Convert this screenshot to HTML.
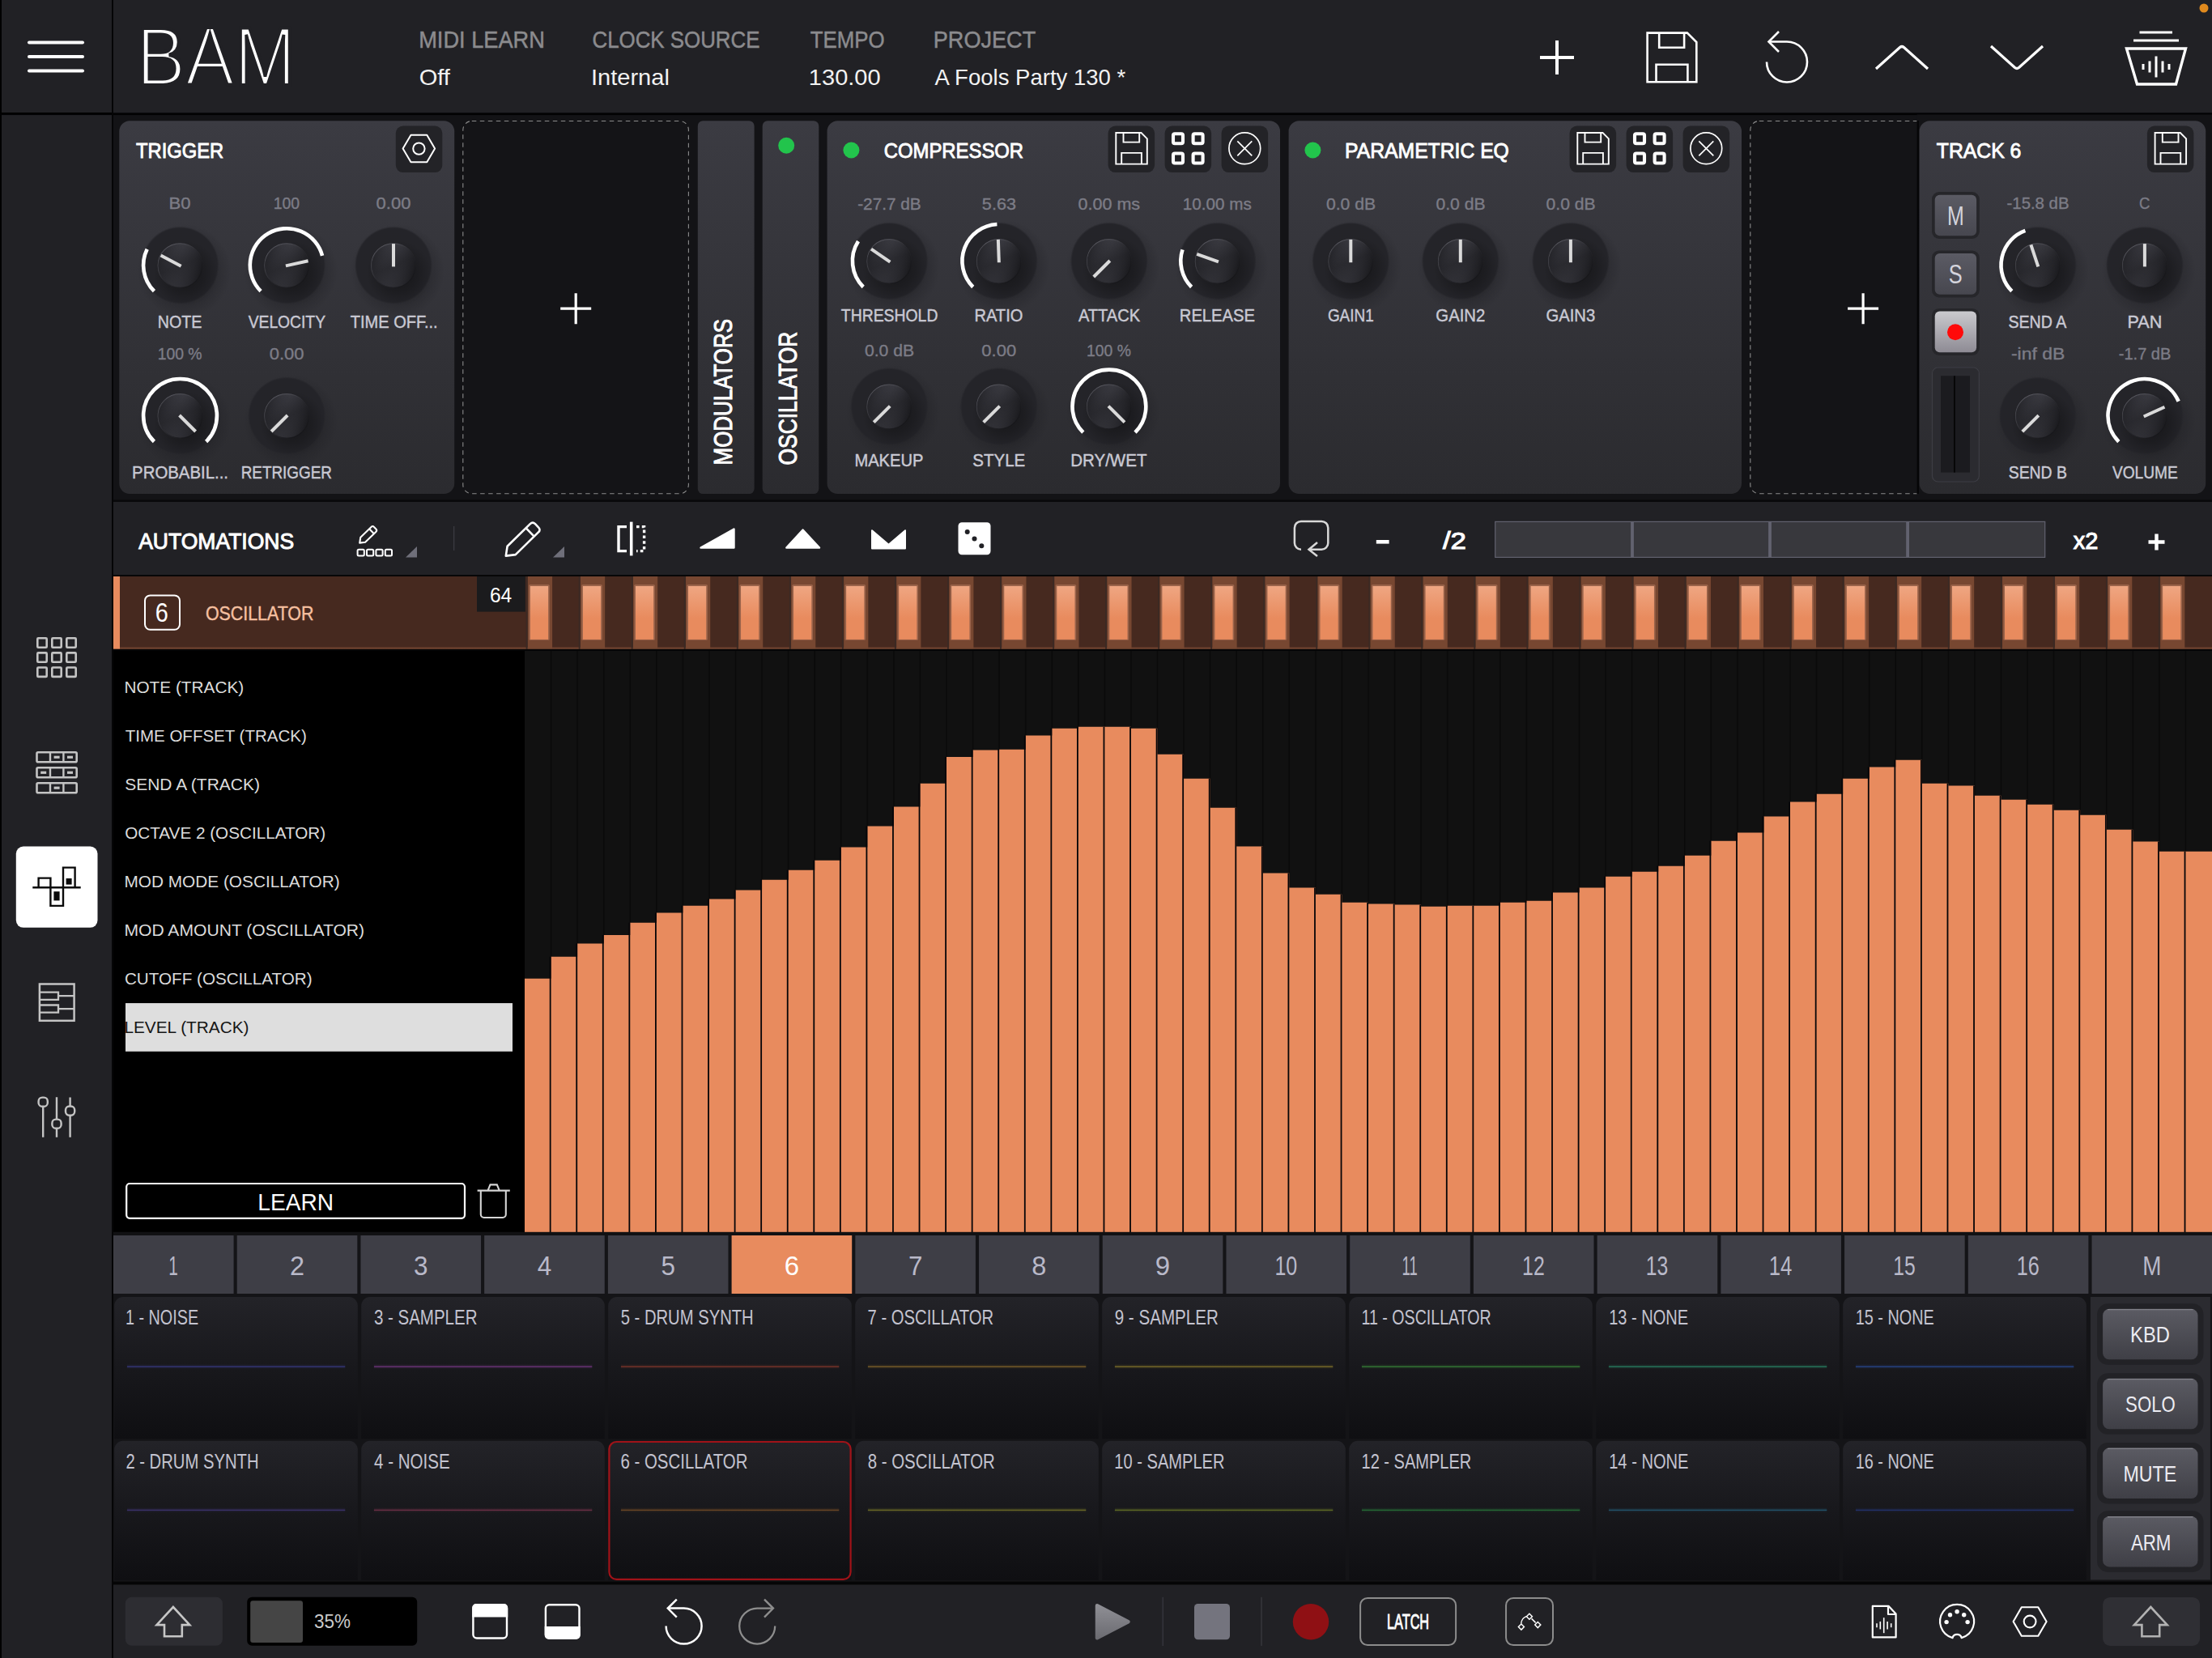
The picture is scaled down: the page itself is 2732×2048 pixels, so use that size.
<!DOCTYPE html>
<html lang="en"><head><meta charset="utf-8"><title>BAM - Automations</title>
<style>
html,body{margin:0;padding:0;background:#131316;overflow:hidden}
svg{display:block;font-family:'Liberation Sans', sans-serif}
@media (min-resolution:1.5dppx){svg{width:1366px;height:1024px}}
</style></head><body>
<svg width="2732" height="2048" viewBox="0 0 2732 2048">
<defs>
<linearGradient id="panel" x1="0" y1="0" x2="0" y2="1"><stop offset="0" stop-color="#3b3b42"/><stop offset="1" stop-color="#2b2b2f"/></linearGradient>
<radialGradient id="kdisc"><stop offset="0" stop-color="#242428"/><stop offset="0.95" stop-color="#242429"/><stop offset="1" stop-color="#242429" stop-opacity="0"/></radialGradient>
<radialGradient id="kshadow"><stop offset="0" stop-color="#1c1c20" stop-opacity="0.5"/><stop offset="0.72" stop-color="#1c1c20" stop-opacity="0.3"/><stop offset="1" stop-color="#1c1c20" stop-opacity="0"/></radialGradient>
<radialGradient id="kcapsh"><stop offset="0" stop-color="#000" stop-opacity="0.4"/><stop offset="0.6" stop-color="#000" stop-opacity="0.2"/><stop offset="1" stop-color="#000" stop-opacity="0"/></radialGradient>
<linearGradient id="kcap" x1="0.3" y1="0" x2="0.7" y2="1"><stop offset="0" stop-color="#3d3d44"/><stop offset="0.5" stop-color="#2a2a2f"/><stop offset="1" stop-color="#333339"/></linearGradient>
<linearGradient id="kcaprim" x1="0.15" y1="0.1" x2="0.85" y2="0.9"><stop offset="0" stop-color="#5c5c64"/><stop offset="0.5" stop-color="#2b2b30"/><stop offset="1" stop-color="#151518"/></linearGradient>
<linearGradient id="kcap2" x1="0" y1="0.35" x2="1" y2="0.65"><stop offset="0" stop-color="#1d1d21" stop-opacity="0.75"/><stop offset="0.45" stop-color="#2e2e34" stop-opacity="0"/><stop offset="1" stop-color="#151518" stop-opacity="0.85"/></linearGradient>

<linearGradient id="msbtn" x1="0" y1="0" x2="0" y2="1"><stop offset="0" stop-color="#5b5b64"/><stop offset="1" stop-color="#47474f"/></linearGradient>
<linearGradient id="recbtn" x1="0" y1="0" x2="0" y2="1"><stop offset="0" stop-color="#cacace"/><stop offset="1" stop-color="#8e8b94"/></linearGradient>
<linearGradient id="rowglow" x1="0" y1="0" x2="0" y2="1"><stop offset="0" stop-color="#e88b5e" stop-opacity="0"/><stop offset="1" stop-color="#e88b5e" stop-opacity="0.42"/></linearGradient><linearGradient id="stepg" x1="0" y1="0" x2="0" y2="1"><stop offset="0" stop-color="#efa682"/><stop offset="0.6" stop-color="#e88b5e"/><stop offset="1" stop-color="#e88b5e"/></linearGradient><linearGradient id="padg" x1="0" y1="0" x2="0" y2="1"><stop offset="0" stop-color="#232328"/><stop offset="0.5" stop-color="#18181c"/><stop offset="1" stop-color="#0f0f12"/></linearGradient><linearGradient id="rbtn" x1="0" y1="0" x2="0" y2="1"><stop offset="0" stop-color="#5b5b63"/><stop offset="1" stop-color="#3f3f46"/></linearGradient><linearGradient id="playg" x1="0" y1="0" x2="0" y2="1"><stop offset="0" stop-color="#8e8e94"/><stop offset="1" stop-color="#6c6c72"/></linearGradient></defs>
<rect x="0.00" y="0.00" width="2732.00" height="2048.00" fill="#131316"/>
<rect x="0.00" y="0.00" width="140.00" height="2048.00" fill="#000"/>
<rect x="2.00" y="0.00" width="136.00" height="139.00" fill="#212125"/>
<rect x="2.00" y="141.50" width="136.00" height="1906.50" fill="#212125"/>
<rect x="140.00" y="0.00" width="2592.00" height="139.00" fill="#212125"/>
<rect x="0.00" y="139.60" width="2732.00" height="2.50" fill="#020203"/>
<rect x="138.00" y="0.00" width="2.00" height="2048.00" fill="#050506"/>
<line x1="36" y1="52.4" x2="102" y2="52.4" stroke="#fff" stroke-width="4" stroke-linecap="round"/>
<line x1="36" y1="69.9" x2="102" y2="69.9" stroke="#fff" stroke-width="4" stroke-linecap="round"/>
<line x1="36" y1="87.6" x2="102" y2="87.6" stroke="#fff" stroke-width="4" stroke-linecap="round"/>
<text x="168.5" y="105.4" font-size="101.9" fill="#fff" stroke="#212125" stroke-width="4.2" textLength="196.6" lengthAdjust="spacingAndGlyphs">BAM</text>
<text x="517.17" y="58.9" font-size="29.5" fill="#8b8b8e" textLength="155.73" lengthAdjust="spacingAndGlyphs" stroke="#8b8b8e" stroke-width="0.5">MIDI LEARN</text>
<text x="517.68" y="105.0" font-size="27.5" fill="#f2f2f2" textLength="38.24" lengthAdjust="spacingAndGlyphs">Off</text>
<text x="731.53" y="58.9" font-size="29.5" fill="#8b8b8e" textLength="206.95" lengthAdjust="spacingAndGlyphs" stroke="#8b8b8e" stroke-width="0.5">CLOCK SOURCE</text>
<text x="729.96" y="105.0" font-size="27.5" fill="#f2f2f2" textLength="96.96" lengthAdjust="spacingAndGlyphs">Internal</text>
<text x="1000.81" y="58.9" font-size="29.5" fill="#8b8b8e" textLength="91.94" lengthAdjust="spacingAndGlyphs" stroke="#8b8b8e" stroke-width="0.5">TEMPO</text>
<text x="998.89" y="105.0" font-size="27.5" fill="#f2f2f2" textLength="88.78" lengthAdjust="spacingAndGlyphs">130.00</text>
<text x="1152.78" y="58.9" font-size="29.5" fill="#8b8b8e" textLength="126.46" lengthAdjust="spacingAndGlyphs" stroke="#8b8b8e" stroke-width="0.5">PROJECT</text>
<text x="1154.60" y="105.0" font-size="27.5" fill="#f2f2f2" textLength="235.65" lengthAdjust="spacingAndGlyphs">A Fools Party 130 *</text>
<path d="M1902 71H1944M1923 50V92" fill="none" stroke="#fff" stroke-width="4"/>
<path d="M2034.6 40.6H2083.8L2095.3 52.1V101.3H2034.6Z" fill="none" stroke="#fff" stroke-width="2.6" stroke-linejoin="miter"/>
<path d="M2049.2 40.6V58.8H2080.1V40.6" fill="none" stroke="#fff" stroke-width="2.6"/>
<path d="M2045.5 101.3V79.8H2084.4V101.3" fill="none" stroke="#fff" stroke-width="2.6"/>
<path d="M2184.5 51.5H2207.0A25 25 0 1 1 2182.0 76.5" fill="none" stroke="#fff" stroke-width="2.6"/>
<path d="M2197.0 39.0L2184.5 51.5L2197.0 64.0" fill="none" stroke="#fff" stroke-width="2.6"/>
<path d="M2317 85L2346.5 58.5Q2349 56.5 2351.5 58.5L2381 85" fill="none" stroke="#fff" stroke-width="3.2"/>
<path d="M2459 57L2488.5 83.5Q2491 85.5 2493.5 83.5L2523 57" fill="none" stroke="#fff" stroke-width="3.2"/>
<path d="M2642.5 40H2683M2635 50H2691" fill="none" stroke="#fff" stroke-width="3.2"/>
<path d="M2626.5 60H2699.5L2687.5 104H2639.5Z" fill="none" stroke="#fff" stroke-width="3.4"/>
<line x1="2647" y1="79.0" x2="2647" y2="86.0" stroke="#fff" stroke-width="3"/>
<line x1="2655" y1="75.5" x2="2655" y2="89.5" stroke="#fff" stroke-width="3"/>
<line x1="2663" y1="69.5" x2="2663" y2="95.5" stroke="#fff" stroke-width="3"/>
<line x1="2671" y1="75.5" x2="2671" y2="89.5" stroke="#fff" stroke-width="3"/>
<line x1="2679" y1="79.0" x2="2679" y2="86.0" stroke="#fff" stroke-width="3"/>
<circle cx="2722" cy="10" r="5.5" fill="#e08a1e"/>
<rect x="147.30" y="149.20" width="413.90" height="460.90" rx="13" fill="url(#panel)"/>
<text x="168.00" y="195.0" font-size="26.5" fill="#fff" textLength="108.15" lengthAdjust="spacingAndGlyphs" stroke="#fff" stroke-width="0.9">TRIGGER</text>
<rect x="488.80" y="155.60" width="57.50" height="57.50" rx="9" fill="#232327"/>
<polygon points="497.6,183.6 507.5,166.8 527.3,166.8 537.1,183.6 527.3,200.3 507.5,200.3" fill="none" stroke="#fff" stroke-width="2" stroke-linejoin="round"/>
<circle cx="517.4" cy="183.6" r="7.2" fill="none" stroke="#fff" stroke-width="2"/>
<circle cx="227.5" cy="334.6" r="58" fill="url(#kshadow)"/>
<circle cx="222.5" cy="327.6" r="48" fill="url(#kdisc)"/>
<circle cx="229.5" cy="337.6" r="40" fill="url(#kcapsh)"/>
<circle cx="222.5" cy="328.1" r="27.3" fill="url(#kcap)" stroke="url(#kcaprim)" stroke-width="1.2"/>
<circle cx="222.5" cy="328.1" r="27.3" fill="url(#kcap2)"/>
<line x1="223.65" y1="328.71" x2="198.66" y2="315.42" stroke="#dadada" stroke-width="4"/>
<path d="M190.40 359.70A45.4 45.4 0 0 1 181.69 307.70" fill="none" stroke="#fff" stroke-width="4.6"/>
<text x="208.48" y="258.1" font-size="19.5" fill="#7c7c86" textLength="27.03" lengthAdjust="spacingAndGlyphs" stroke="#7c7c86" stroke-width="0.35">B0</text>
<text x="194.81" y="404.5" font-size="22" fill="#c9c9d3" textLength="54.58" lengthAdjust="spacingAndGlyphs" stroke="#c9c9d3" stroke-width="0.45">NOTE</text>
<circle cx="359.2" cy="334.6" r="58" fill="url(#kshadow)"/>
<circle cx="354.2" cy="327.6" r="48" fill="url(#kdisc)"/>
<circle cx="361.2" cy="337.6" r="40" fill="url(#kcapsh)"/>
<circle cx="354.2" cy="328.1" r="27.3" fill="url(#kcap)" stroke="url(#kcaprim)" stroke-width="1.2"/>
<circle cx="354.2" cy="328.1" r="27.3" fill="url(#kcap2)"/>
<line x1="352.93" y1="328.38" x2="380.56" y2="322.26" stroke="#dadada" stroke-width="4"/>
<path d="M322.10 359.70A45.4 45.4 0 1 1 398.05 315.85" fill="none" stroke="#fff" stroke-width="4.6"/>
<text x="337.63" y="258.1" font-size="19.5" fill="#7c7c86" textLength="32.43" lengthAdjust="spacingAndGlyphs" stroke="#7c7c86" stroke-width="0.35">100</text>
<text x="306.68" y="404.5" font-size="22" fill="#c9c9d3" textLength="95.32" lengthAdjust="spacingAndGlyphs" stroke="#c9c9d3" stroke-width="0.45">VELOCITY</text>
<circle cx="491.0" cy="334.6" r="58" fill="url(#kshadow)"/>
<circle cx="486.0" cy="327.6" r="48" fill="url(#kdisc)"/>
<circle cx="493.0" cy="337.6" r="40" fill="url(#kcapsh)"/>
<circle cx="486.0" cy="328.1" r="27.3" fill="url(#kcap)" stroke="url(#kcaprim)" stroke-width="1.2"/>
<circle cx="486.0" cy="328.1" r="27.3" fill="url(#kcap2)"/>
<line x1="486.00" y1="329.40" x2="486.00" y2="301.10" stroke="#dadada" stroke-width="4"/>
<text x="464.58" y="258.1" font-size="19.5" fill="#7c7c86" textLength="42.78" lengthAdjust="spacingAndGlyphs" stroke="#7c7c86" stroke-width="0.35">0.00</text>
<text x="432.75" y="404.5" font-size="22" fill="#c9c9d3" textLength="107.92" lengthAdjust="spacingAndGlyphs" stroke="#c9c9d3" stroke-width="0.45">TIME OFF...</text>
<circle cx="227.5" cy="520.4" r="58" fill="url(#kshadow)"/>
<circle cx="222.5" cy="513.4" r="48" fill="url(#kdisc)"/>
<circle cx="229.5" cy="523.4" r="40" fill="url(#kcapsh)"/>
<circle cx="222.5" cy="513.9" r="27.3" fill="url(#kcap)" stroke="url(#kcaprim)" stroke-width="1.2"/>
<circle cx="222.5" cy="513.9" r="27.3" fill="url(#kcap2)"/>
<line x1="221.58" y1="512.98" x2="241.59" y2="532.99" stroke="#dadada" stroke-width="4"/>
<path d="M190.40 545.50A45.4 45.4 0 1 1 254.60 545.50" fill="none" stroke="#fff" stroke-width="4.6"/>
<text x="194.68" y="444.0" font-size="19.5" fill="#7c7c86" textLength="54.93" lengthAdjust="spacingAndGlyphs" stroke="#7c7c86" stroke-width="0.35">100 %</text>
<text x="163.10" y="590.6" font-size="22" fill="#c9c9d3" textLength="118.92" lengthAdjust="spacingAndGlyphs" stroke="#c9c9d3" stroke-width="0.45">PROBABIL...</text>
<circle cx="359.2" cy="520.4" r="58" fill="url(#kshadow)"/>
<circle cx="354.2" cy="513.4" r="48" fill="url(#kdisc)"/>
<circle cx="361.2" cy="523.4" r="40" fill="url(#kcapsh)"/>
<circle cx="354.2" cy="513.9" r="27.3" fill="url(#kcap)" stroke="url(#kcaprim)" stroke-width="1.2"/>
<circle cx="354.2" cy="513.9" r="27.3" fill="url(#kcap2)"/>
<line x1="355.12" y1="512.98" x2="335.11" y2="532.99" stroke="#dadada" stroke-width="4"/>
<text x="332.78" y="444.0" font-size="19.5" fill="#7c7c86" textLength="42.78" lengthAdjust="spacingAndGlyphs" stroke="#7c7c86" stroke-width="0.35">0.00</text>
<text x="297.67" y="590.6" font-size="22" fill="#c9c9d3" textLength="112.23" lengthAdjust="spacingAndGlyphs" stroke="#c9c9d3" stroke-width="0.45">RETRIGGER</text>
<rect x="571.8" y="149.5" width="278.6" height="460.3" rx="11" fill="#141417" stroke="#8c8c8c" stroke-width="1.1" stroke-dasharray="5.5 4.5"/>
<path d="M692.2 381.2H730.2M711.2 362.2V400.2" fill="none" stroke="#fff" stroke-width="3.2"/>
<rect x="861.80" y="149.20" width="69.80" height="460.90" rx="6.5" fill="url(#panel)"/>
<rect x="941.70" y="149.20" width="69.60" height="460.90" rx="6.5" fill="url(#panel)"/>
<circle cx="971.2" cy="179.7" r="10" fill="#22c44c"/>
<text transform="translate(903.8 574.4) rotate(-90)" font-size="31" fill="#fff" stroke="#fff" stroke-width="1.0" textLength="180.4" lengthAdjust="spacingAndGlyphs">MODULATORS</text>
<text transform="translate(984.3 574.4) rotate(-90)" font-size="31" fill="#fff" stroke="#fff" stroke-width="1.0" textLength="164.6" lengthAdjust="spacingAndGlyphs">OSCILLATOR</text>
<rect x="1021.60" y="149.20" width="559.40" height="460.90" rx="13" fill="url(#panel)"/>
<circle cx="1051.4" cy="185.5" r="10" fill="#22c44c"/>
<text x="1091.83" y="194.6" font-size="26.5" fill="#fff" textLength="172.27" lengthAdjust="spacingAndGlyphs" stroke="#fff" stroke-width="0.9">COMPRESSOR</text>
<rect x="1368.60" y="155.60" width="57.50" height="57.50" rx="9" fill="#232327"/>
<rect x="1438.60" y="155.60" width="57.50" height="57.50" rx="9" fill="#232327"/>
<rect x="1508.60" y="155.60" width="57.50" height="57.50" rx="9" fill="#232327"/>
<path d="M1378.3 164.0H1409.5L1416.8 171.3V202.6H1378.3Z" fill="none" stroke="#fff" stroke-width="1.9" stroke-linejoin="miter"/>
<path d="M1387.5 164.0V175.6H1407.2V164.0" fill="none" stroke="#fff" stroke-width="1.9"/>
<path d="M1385.2 202.6V188.9H1409.9V202.6" fill="none" stroke="#fff" stroke-width="1.9"/>
<rect x="1449.0" y="165.2" width="12" height="12" rx="2" fill="none" stroke="#fff" stroke-width="4.1"/>
<rect x="1449.0" y="189.5" width="12" height="12" rx="2" fill="none" stroke="#fff" stroke-width="4.1"/>
<rect x="1473.6" y="165.2" width="12" height="12" rx="2" fill="none" stroke="#fff" stroke-width="4.1"/>
<rect x="1473.6" y="189.5" width="12" height="12" rx="2" fill="none" stroke="#fff" stroke-width="4.1"/>
<circle cx="1537.3" cy="183.3" r="19.4" fill="none" stroke="#fff" stroke-width="1.7"/>
<path d="M1528.3 174.3L1546.3 192.3M1546.3 174.3L1528.3 192.3" fill="none" stroke="#fff" stroke-width="1.7"/>
<circle cx="1103.3" cy="329.4" r="58" fill="url(#kshadow)"/>
<circle cx="1098.3" cy="322.4" r="48" fill="url(#kdisc)"/>
<circle cx="1105.3" cy="332.4" r="40" fill="url(#kcapsh)"/>
<circle cx="1098.3" cy="322.9" r="27.3" fill="url(#kcap)" stroke="url(#kcaprim)" stroke-width="1.2"/>
<circle cx="1098.3" cy="322.9" r="27.3" fill="url(#kcap2)"/>
<line x1="1099.37" y1="323.63" x2="1076.02" y2="307.65" stroke="#dadada" stroke-width="4"/>
<path d="M1066.20 354.50A45.4 45.4 0 0 1 1060.01 298.01" fill="none" stroke="#fff" stroke-width="4.6"/>
<text x="1059.18" y="259.3" font-size="19.5" fill="#7c7c86" textLength="78.47" lengthAdjust="spacingAndGlyphs" stroke="#7c7c86" stroke-width="0.35">-27.7 dB</text>
<text x="1038.80" y="396.8" font-size="22" fill="#c9c9d3" textLength="119.59" lengthAdjust="spacingAndGlyphs" stroke="#c9c9d3" stroke-width="0.45">THRESHOLD</text>
<circle cx="1238.8" cy="329.4" r="58" fill="url(#kshadow)"/>
<circle cx="1233.8" cy="322.4" r="48" fill="url(#kdisc)"/>
<circle cx="1240.8" cy="332.4" r="40" fill="url(#kcapsh)"/>
<circle cx="1233.8" cy="322.9" r="27.3" fill="url(#kcap)" stroke="url(#kcaprim)" stroke-width="1.2"/>
<circle cx="1233.8" cy="322.9" r="27.3" fill="url(#kcap2)"/>
<line x1="1233.85" y1="324.20" x2="1232.86" y2="295.92" stroke="#dadada" stroke-width="4"/>
<path d="M1201.70 354.50A45.4 45.4 0 0 1 1231.42 277.06" fill="none" stroke="#fff" stroke-width="4.6"/>
<text x="1212.89" y="259.3" font-size="19.5" fill="#7c7c86" textLength="42.03" lengthAdjust="spacingAndGlyphs" stroke="#7c7c86" stroke-width="0.35">5.63</text>
<text x="1203.43" y="396.8" font-size="22" fill="#c9c9d3" textLength="59.92" lengthAdjust="spacingAndGlyphs" stroke="#c9c9d3" stroke-width="0.45">RATIO</text>
<circle cx="1374.9" cy="329.4" r="58" fill="url(#kshadow)"/>
<circle cx="1369.9" cy="322.4" r="48" fill="url(#kdisc)"/>
<circle cx="1376.9" cy="332.4" r="40" fill="url(#kcapsh)"/>
<circle cx="1369.9" cy="322.9" r="27.3" fill="url(#kcap)" stroke="url(#kcaprim)" stroke-width="1.2"/>
<circle cx="1369.9" cy="322.9" r="27.3" fill="url(#kcap2)"/>
<line x1="1370.82" y1="321.98" x2="1350.81" y2="341.99" stroke="#dadada" stroke-width="4"/>
<text x="1331.50" y="259.3" font-size="19.5" fill="#7c7c86" textLength="76.65" lengthAdjust="spacingAndGlyphs" stroke="#7c7c86" stroke-width="0.35">0.00 ms</text>
<text x="1331.88" y="396.8" font-size="22" fill="#c9c9d3" textLength="76.30" lengthAdjust="spacingAndGlyphs" stroke="#c9c9d3" stroke-width="0.45">ATTACK</text>
<circle cx="1508.7" cy="329.4" r="58" fill="url(#kshadow)"/>
<circle cx="1503.7" cy="322.4" r="48" fill="url(#kdisc)"/>
<circle cx="1510.7" cy="332.4" r="40" fill="url(#kcapsh)"/>
<circle cx="1503.7" cy="322.9" r="27.3" fill="url(#kcap)" stroke="url(#kcaprim)" stroke-width="1.2"/>
<circle cx="1503.7" cy="322.9" r="27.3" fill="url(#kcap2)"/>
<line x1="1504.92" y1="323.34" x2="1478.26" y2="313.84" stroke="#dadada" stroke-width="4"/>
<path d="M1471.60 354.50A45.4 45.4 0 0 1 1460.52 308.37" fill="none" stroke="#fff" stroke-width="4.6"/>
<text x="1460.80" y="259.3" font-size="19.5" fill="#7c7c86" textLength="84.95" lengthAdjust="spacingAndGlyphs" stroke="#7c7c86" stroke-width="0.35">10.00 ms</text>
<text x="1456.82" y="396.8" font-size="22" fill="#c9c9d3" textLength="93.07" lengthAdjust="spacingAndGlyphs" stroke="#c9c9d3" stroke-width="0.45">RELEASE</text>
<circle cx="1103.3" cy="509.0" r="58" fill="url(#kshadow)"/>
<circle cx="1098.3" cy="502.0" r="48" fill="url(#kdisc)"/>
<circle cx="1105.3" cy="512.0" r="40" fill="url(#kcapsh)"/>
<circle cx="1098.3" cy="502.5" r="27.3" fill="url(#kcap)" stroke="url(#kcaprim)" stroke-width="1.2"/>
<circle cx="1098.3" cy="502.5" r="27.3" fill="url(#kcap2)"/>
<line x1="1099.22" y1="501.58" x2="1079.21" y2="521.59" stroke="#dadada" stroke-width="4"/>
<text x="1067.91" y="439.7" font-size="19.5" fill="#7c7c86" textLength="61.18" lengthAdjust="spacingAndGlyphs" stroke="#7c7c86" stroke-width="0.35">0.0 dB</text>
<text x="1055.42" y="576.3" font-size="22" fill="#c9c9d3" textLength="84.99" lengthAdjust="spacingAndGlyphs" stroke="#c9c9d3" stroke-width="0.45">MAKEUP</text>
<circle cx="1238.8" cy="509.0" r="58" fill="url(#kshadow)"/>
<circle cx="1233.8" cy="502.0" r="48" fill="url(#kdisc)"/>
<circle cx="1240.8" cy="512.0" r="40" fill="url(#kcapsh)"/>
<circle cx="1233.8" cy="502.5" r="27.3" fill="url(#kcap)" stroke="url(#kcaprim)" stroke-width="1.2"/>
<circle cx="1233.8" cy="502.5" r="27.3" fill="url(#kcap2)"/>
<line x1="1234.72" y1="501.58" x2="1214.71" y2="521.59" stroke="#dadada" stroke-width="4"/>
<text x="1212.38" y="439.7" font-size="19.5" fill="#7c7c86" textLength="42.78" lengthAdjust="spacingAndGlyphs" stroke="#7c7c86" stroke-width="0.35">0.00</text>
<text x="1201.34" y="576.3" font-size="22" fill="#c9c9d3" textLength="64.86" lengthAdjust="spacingAndGlyphs" stroke="#c9c9d3" stroke-width="0.45">STYLE</text>
<circle cx="1374.9" cy="509.0" r="58" fill="url(#kshadow)"/>
<circle cx="1369.9" cy="502.0" r="48" fill="url(#kdisc)"/>
<circle cx="1376.9" cy="512.0" r="40" fill="url(#kcapsh)"/>
<circle cx="1369.9" cy="502.5" r="27.3" fill="url(#kcap)" stroke="url(#kcaprim)" stroke-width="1.2"/>
<circle cx="1369.9" cy="502.5" r="27.3" fill="url(#kcap2)"/>
<line x1="1368.98" y1="501.58" x2="1388.99" y2="521.59" stroke="#dadada" stroke-width="4"/>
<path d="M1337.80 534.10A45.4 45.4 0 1 1 1402.00 534.10" fill="none" stroke="#fff" stroke-width="4.6"/>
<text x="1342.08" y="439.7" font-size="19.5" fill="#7c7c86" textLength="54.93" lengthAdjust="spacingAndGlyphs" stroke="#7c7c86" stroke-width="0.35">100 %</text>
<text x="1322.24" y="576.3" font-size="22" fill="#c9c9d3" textLength="94.19" lengthAdjust="spacingAndGlyphs" stroke="#c9c9d3" stroke-width="0.45">DRY/WET</text>
<rect x="1591.60" y="149.20" width="559.40" height="460.90" rx="13" fill="url(#panel)"/>
<circle cx="1621.4" cy="185.5" r="10" fill="#22c44c"/>
<text x="1661.08" y="194.6" font-size="26.5" fill="#fff" textLength="202.76" lengthAdjust="spacingAndGlyphs" stroke="#fff" stroke-width="0.9">PARAMETRIC EQ</text>
<rect x="1938.60" y="155.60" width="57.50" height="57.50" rx="9" fill="#232327"/>
<rect x="2008.60" y="155.60" width="57.50" height="57.50" rx="9" fill="#232327"/>
<rect x="2078.60" y="155.60" width="57.50" height="57.50" rx="9" fill="#232327"/>
<path d="M1948.3 164.0H1979.5L1986.8 171.3V202.6H1948.3Z" fill="none" stroke="#fff" stroke-width="1.9" stroke-linejoin="miter"/>
<path d="M1957.5 164.0V175.6H1977.2V164.0" fill="none" stroke="#fff" stroke-width="1.9"/>
<path d="M1955.2 202.6V188.9H1979.9V202.6" fill="none" stroke="#fff" stroke-width="1.9"/>
<rect x="2019.0" y="165.2" width="12" height="12" rx="2" fill="none" stroke="#fff" stroke-width="4.1"/>
<rect x="2019.0" y="189.5" width="12" height="12" rx="2" fill="none" stroke="#fff" stroke-width="4.1"/>
<rect x="2043.6" y="165.2" width="12" height="12" rx="2" fill="none" stroke="#fff" stroke-width="4.1"/>
<rect x="2043.6" y="189.5" width="12" height="12" rx="2" fill="none" stroke="#fff" stroke-width="4.1"/>
<circle cx="2107.3" cy="183.3" r="19.4" fill="none" stroke="#fff" stroke-width="1.7"/>
<path d="M2098.3 174.3L2116.3 192.3M2116.3 174.3L2098.3 192.3" fill="none" stroke="#fff" stroke-width="1.7"/>
<circle cx="1673.3" cy="329.4" r="58" fill="url(#kshadow)"/>
<circle cx="1668.3" cy="322.4" r="48" fill="url(#kdisc)"/>
<circle cx="1675.3" cy="332.4" r="40" fill="url(#kcapsh)"/>
<circle cx="1668.3" cy="322.9" r="27.3" fill="url(#kcap)" stroke="url(#kcaprim)" stroke-width="1.2"/>
<circle cx="1668.3" cy="322.9" r="27.3" fill="url(#kcap2)"/>
<line x1="1668.30" y1="324.20" x2="1668.30" y2="295.90" stroke="#dadada" stroke-width="4"/>
<text x="1637.91" y="259.3" font-size="19.5" fill="#7c7c86" textLength="61.18" lengthAdjust="spacingAndGlyphs" stroke="#7c7c86" stroke-width="0.35">0.0 dB</text>
<text x="1639.91" y="396.8" font-size="22" fill="#c9c9d3" textLength="56.79" lengthAdjust="spacingAndGlyphs" stroke="#c9c9d3" stroke-width="0.45">GAIN1</text>
<circle cx="1808.8" cy="329.4" r="58" fill="url(#kshadow)"/>
<circle cx="1803.8" cy="322.4" r="48" fill="url(#kdisc)"/>
<circle cx="1810.8" cy="332.4" r="40" fill="url(#kcapsh)"/>
<circle cx="1803.8" cy="322.9" r="27.3" fill="url(#kcap)" stroke="url(#kcaprim)" stroke-width="1.2"/>
<circle cx="1803.8" cy="322.9" r="27.3" fill="url(#kcap2)"/>
<line x1="1803.80" y1="324.20" x2="1803.80" y2="295.90" stroke="#dadada" stroke-width="4"/>
<text x="1773.41" y="259.3" font-size="19.5" fill="#7c7c86" textLength="61.18" lengthAdjust="spacingAndGlyphs" stroke="#7c7c86" stroke-width="0.35">0.0 dB</text>
<text x="1773.35" y="396.8" font-size="22" fill="#c9c9d3" textLength="60.92" lengthAdjust="spacingAndGlyphs" stroke="#c9c9d3" stroke-width="0.45">GAIN2</text>
<circle cx="1944.9" cy="329.4" r="58" fill="url(#kshadow)"/>
<circle cx="1939.9" cy="322.4" r="48" fill="url(#kdisc)"/>
<circle cx="1946.9" cy="332.4" r="40" fill="url(#kcapsh)"/>
<circle cx="1939.9" cy="322.9" r="27.3" fill="url(#kcap)" stroke="url(#kcaprim)" stroke-width="1.2"/>
<circle cx="1939.9" cy="322.9" r="27.3" fill="url(#kcap2)"/>
<line x1="1939.90" y1="324.20" x2="1939.90" y2="295.90" stroke="#dadada" stroke-width="4"/>
<text x="1909.51" y="259.3" font-size="19.5" fill="#7c7c86" textLength="61.18" lengthAdjust="spacingAndGlyphs" stroke="#7c7c86" stroke-width="0.35">0.0 dB</text>
<text x="1909.46" y="396.8" font-size="22" fill="#c9c9d3" textLength="60.68" lengthAdjust="spacingAndGlyphs" stroke="#c9c9d3" stroke-width="0.45">GAIN3</text>
<rect x="2161.8" y="149.5" width="278.5999999999999" height="460.3" rx="11" fill="#141417" stroke="#8c8c8c" stroke-width="1.1" stroke-dasharray="5.5 4.5"/>
<path d="M2282.1 381.2H2320.1M2301.1 362.2V400.2" fill="none" stroke="#fff" stroke-width="3.2"/>
<rect x="2367.50" y="141.50" width="364.50" height="476.00" fill="#131316"/>
<rect x="2367.70" y="149.00" width="2.20" height="461.00" fill="#050506"/>
<rect x="2370.60" y="149.20" width="353.60" height="460.90" rx="13" fill="url(#panel)"/>
<text x="2391.78" y="194.6" font-size="26.5" fill="#fff" textLength="104.62" lengthAdjust="spacingAndGlyphs" stroke="#fff" stroke-width="0.9">TRACK 6</text>
<rect x="2651.90" y="155.60" width="57.50" height="57.50" rx="9" fill="#232327"/>
<path d="M2661.6 164.0H2692.8L2700.1 171.3V202.6H2661.6Z" fill="none" stroke="#fff" stroke-width="1.9" stroke-linejoin="miter"/>
<path d="M2670.8 164.0V175.6H2690.5V164.0" fill="none" stroke="#fff" stroke-width="1.9"/>
<path d="M2668.5 202.6V188.9H2693.2V202.6" fill="none" stroke="#fff" stroke-width="1.9"/>
<rect x="2386.00" y="237.00" width="58.80" height="58.00" rx="9" fill="#26262a"/>
<rect x="2389.70" y="240.70" width="51.40" height="50.60" rx="6" fill="url(#msbtn)"/>
<text x="2404.91" y="278.0" font-size="33" fill="#d4d4dc" textLength="20.77" lengthAdjust="spacingAndGlyphs">M</text>
<rect x="2386.00" y="309.40" width="58.80" height="58.00" rx="9" fill="#26262a"/>
<rect x="2389.70" y="313.10" width="51.40" height="50.60" rx="6" fill="url(#msbtn)"/>
<text x="2406.85" y="350.4" font-size="33" fill="#d4d4dc" textLength="16.91" lengthAdjust="spacingAndGlyphs">S</text>
<rect x="2386.00" y="380.90" width="58.80" height="58.00" rx="9" fill="#26262a"/>
<rect x="2389.70" y="384.60" width="51.40" height="50.60" rx="6" fill="url(#recbtn)"/>
<circle cx="2415" cy="410.2" r="10" fill="#ff0a0a"/>
<rect x="2386.5" y="454" width="57.8" height="141" rx="7" fill="#2b2b30" stroke="#3d3d44" stroke-width="1.2"/>
<rect x="2397.00" y="464.30" width="36.00" height="119.30" fill="#1b1b1f"/>
<rect x="2413.00" y="464.30" width="1.80" height="119.30" fill="#050506"/>
<circle cx="2521.9" cy="334.6" r="58" fill="url(#kshadow)"/>
<circle cx="2516.9" cy="327.6" r="48" fill="url(#kdisc)"/>
<circle cx="2523.9" cy="337.6" r="40" fill="url(#kcapsh)"/>
<circle cx="2516.9" cy="328.1" r="27.3" fill="url(#kcap)" stroke="url(#kcaprim)" stroke-width="1.2"/>
<circle cx="2516.9" cy="328.1" r="27.3" fill="url(#kcap2)"/>
<line x1="2517.31" y1="329.33" x2="2508.38" y2="302.48" stroke="#dadada" stroke-width="4"/>
<path d="M2484.80 359.70A45.4 45.4 0 0 1 2501.37 284.94" fill="none" stroke="#fff" stroke-width="4.6"/>
<text x="2478.54" y="258.1" font-size="19.5" fill="#7c7c86" textLength="76.94" lengthAdjust="spacingAndGlyphs" stroke="#7c7c86" stroke-width="0.35">-15.8 dB</text>
<text x="2480.48" y="404.5" font-size="22" fill="#c9c9d3" textLength="71.90" lengthAdjust="spacingAndGlyphs" stroke="#c9c9d3" stroke-width="0.45">SEND A</text>
<circle cx="2653.9" cy="334.6" r="58" fill="url(#kshadow)"/>
<circle cx="2648.9" cy="327.6" r="48" fill="url(#kdisc)"/>
<circle cx="2655.9" cy="337.6" r="40" fill="url(#kcapsh)"/>
<circle cx="2648.9" cy="328.1" r="27.3" fill="url(#kcap)" stroke="url(#kcaprim)" stroke-width="1.2"/>
<circle cx="2648.9" cy="328.1" r="27.3" fill="url(#kcap2)"/>
<line x1="2648.90" y1="329.40" x2="2648.90" y2="301.10" stroke="#dadada" stroke-width="4"/>
<text x="2642.11" y="258.1" font-size="19.5" fill="#7c7c86" textLength="13.42" lengthAdjust="spacingAndGlyphs" stroke="#7c7c86" stroke-width="0.35">C</text>
<text x="2627.41" y="404.5" font-size="22" fill="#c9c9d3" textLength="42.85" lengthAdjust="spacingAndGlyphs" stroke="#c9c9d3" stroke-width="0.45">PAN</text>
<circle cx="2521.9" cy="520.5" r="58" fill="url(#kshadow)"/>
<circle cx="2516.9" cy="513.5" r="48" fill="url(#kdisc)"/>
<circle cx="2523.9" cy="523.5" r="40" fill="url(#kcapsh)"/>
<circle cx="2516.9" cy="514.0" r="27.3" fill="url(#kcap)" stroke="url(#kcaprim)" stroke-width="1.2"/>
<circle cx="2516.9" cy="514.0" r="27.3" fill="url(#kcap2)"/>
<line x1="2517.82" y1="513.08" x2="2497.81" y2="533.09" stroke="#dadada" stroke-width="4"/>
<text x="2483.94" y="444.0" font-size="19.5" fill="#7c7c86" textLength="66.33" lengthAdjust="spacingAndGlyphs" stroke="#7c7c86" stroke-width="0.35">-inf dB</text>
<text x="2480.74" y="590.7" font-size="22" fill="#c9c9d3" textLength="72.24" lengthAdjust="spacingAndGlyphs" stroke="#c9c9d3" stroke-width="0.45">SEND B</text>
<circle cx="2653.9" cy="520.5" r="58" fill="url(#kshadow)"/>
<circle cx="2648.9" cy="513.5" r="48" fill="url(#kdisc)"/>
<circle cx="2655.9" cy="523.5" r="40" fill="url(#kcapsh)"/>
<circle cx="2648.9" cy="514.0" r="27.3" fill="url(#kcap)" stroke="url(#kcaprim)" stroke-width="1.2"/>
<circle cx="2648.9" cy="514.0" r="27.3" fill="url(#kcap2)"/>
<line x1="2647.72" y1="514.54" x2="2673.43" y2="502.72" stroke="#dadada" stroke-width="4"/>
<path d="M2616.80 545.60A45.4 45.4 0 1 1 2690.69 495.76" fill="none" stroke="#fff" stroke-width="4.6"/>
<text x="2616.80" y="444.0" font-size="19.5" fill="#7c7c86" textLength="64.57" lengthAdjust="spacingAndGlyphs" stroke="#7c7c86" stroke-width="0.35">-1.7 dB</text>
<text x="2608.88" y="590.7" font-size="22" fill="#c9c9d3" textLength="80.85" lengthAdjust="spacingAndGlyphs" stroke="#c9c9d3" stroke-width="0.45">VOLUME</text>
<rect x="140.00" y="617.40" width="2592.00" height="2.60" fill="#09090b"/>
<rect x="140.00" y="620.00" width="2592.00" height="90.20" fill="#212125"/>
<rect x="140.00" y="710.20" width="2592.00" height="2.00" fill="#050506"/>
<text x="171.20" y="677.6" font-size="28" fill="#fff" textLength="192.00" lengthAdjust="spacingAndGlyphs" stroke="#fff" stroke-width="1.0">AUTOMATIONS</text>
<path d="M444.2 670.6L451.1 669.8L464.3 657.0Q466.1 655.2 464.4 653.4L462.0 651.0Q460.3 649.2 458.5 650.9L445.3 663.7Z" fill="none" stroke="#fff" stroke-width="2.1" stroke-linejoin="round"/>
<path d="M461.9 659.3L456.1 653.2" stroke="#fff" stroke-width="2.1" fill="none"/>
<rect x="441.6" y="678.8" width="8.2" height="7.6" rx="1.5" fill="none" stroke="#fff" stroke-width="2"/>
<rect x="453.0" y="678.8" width="8.2" height="7.6" rx="1.5" fill="none" stroke="#fff" stroke-width="2"/>
<rect x="464.4" y="678.8" width="8.2" height="7.6" rx="1.5" fill="none" stroke="#fff" stroke-width="2"/>
<rect x="475.8" y="678.8" width="8.2" height="7.6" rx="1.5" fill="none" stroke="#fff" stroke-width="2"/>
<path d="M501 688.5H515V675Z" fill="#6f6f7a"/>
<rect x="560.00" y="650.00" width="1.30" height="30.00" fill="#3a3a41"/>
<path d="M624.8 686.6L636.7 685.1L665.0 657.4Q668.1 654.4 665.0 651.3L661.0 647.1Q657.9 644.0 654.8 647.1L626.6 674.7Z" fill="none" stroke="#fff" stroke-width="2.6" stroke-linejoin="round"/>
<path d="M659.7 662.6L649.5 652.2" stroke="#fff" stroke-width="2.6" fill="none"/>
<path d="M683 688.5H697V675Z" fill="#6f6f7a"/>
<path d="M774 650.6H764V680.6H774" fill="none" stroke="#fff" stroke-width="3.4"/>
<line x1="779.7" y1="644.6" x2="779.7" y2="686.4" stroke="#fff" stroke-width="3.6"/>
<path d="M786 650.6H795.6V680.6H786" fill="none" stroke="#fff" stroke-width="3.4" stroke-dasharray="3.6 3.2"/>
<path d="M865.5 676.6L906.5 653.6V676.6Z" fill="#fff" stroke="#fff" stroke-width="2.4" stroke-linejoin="round"/>
<path d="M971.3 676.6L991.6 654.6L1012 676.6Z" fill="#fff" stroke="#fff" stroke-width="2.4" stroke-linejoin="round"/>
<path d="M1077 655.2L1097.5 672.8L1118 655.2V677.4H1077Z" fill="#fff" stroke="#fff" stroke-width="2" stroke-linejoin="round"/>
<rect x="1183.50" y="645.30" width="40.00" height="40.00" rx="4.5" fill="#fff"/>
<circle cx="1194.7" cy="657" r="3" fill="#212125"/>
<circle cx="1203.5" cy="665.6" r="3" fill="#212125"/>
<circle cx="1212.3" cy="674.2" r="3" fill="#212125"/>
<path d="M1607 678.7H1606.9A8 8 0 0 1 1598.9 670.7V651.9A8 8 0 0 1 1606.9 643.9H1632.3A8 8 0 0 1 1640.3 651.9V670.7A8 8 0 0 1 1632.3 678.7H1616.5M1627 670L1616.5 678.7L1627 687" fill="none" stroke="#d8d8d8" stroke-width="2.5"/>
<rect x="1699.80" y="667.00" width="15.80" height="4.60" fill="#fff"/>
<text x="1781.90" y="678.2" font-size="29" fill="#fff" textLength="29.02" lengthAdjust="spacingAndGlyphs" stroke="#fff" stroke-width="1.0">/2</text>
<rect x="1846.7" y="644.4" width="679" height="44" fill="#38383d" stroke="#62626f" stroke-width="1.2"/>
<rect x="2014.10" y="644.40" width="3.80" height="44.00" fill="#62626f"/>
<rect x="2184.10" y="644.40" width="3.80" height="44.00" fill="#62626f"/>
<rect x="2354.20" y="644.40" width="3.80" height="44.00" fill="#62626f"/>
<text x="2560.65" y="677.7" font-size="29" fill="#fff" textLength="30.63" lengthAdjust="spacingAndGlyphs" stroke="#fff" stroke-width="1.0">x2</text>
<path d="M2653.5 669.5H2673.5M2663.5 659.6V679.4" stroke="#fff" stroke-width="4.4" fill="none"/>
<rect x="140.00" y="712.00" width="2592.00" height="89.80" fill="#46291f"/>
<rect x="140.00" y="712.00" width="8.00" height="89.80" fill="#e88b5e"/>
<rect x="148.00" y="798.60" width="2584.00" height="3.20" fill="url(#rowglow)"/>
<rect x="179" y="735.4" width="43" height="42.4" rx="6.5" fill="none" stroke="#fff" stroke-width="2"/>
<text x="191.68" y="768.2" font-size="33" fill="#fff" textLength="16.10" lengthAdjust="spacingAndGlyphs">6</text>
<text x="253.89" y="766.0" font-size="23.5" fill="#f6c0a0" textLength="133.58" lengthAdjust="spacingAndGlyphs" stroke="#f6c0a0" stroke-width="0.4">OSCILLATOR</text>
<rect x="589.00" y="712.00" width="59.90" height="43.60" fill="#1b1b1d"/>
<text x="604.89" y="743.6" font-size="26.5" fill="#fff" textLength="27.33" lengthAdjust="spacingAndGlyphs">64</text>
<rect x="649.70" y="712.00" width="1.80" height="89.80" fill="#3b2a24"/>
<rect x="651.90" y="712.00" width="30.20" height="89.80" fill="#774731"/>
<rect x="653.20" y="722.10" width="25.60" height="68.60" rx="1.5" fill="#9a634a"/>
<rect x="654.90" y="724.00" width="22.20" height="65.90" fill="url(#stepg)"/>
<rect x="714.74" y="712.00" width="1.80" height="89.80" fill="#3b2a24"/>
<rect x="716.94" y="712.00" width="30.20" height="89.80" fill="#774731"/>
<rect x="718.24" y="722.10" width="25.60" height="68.60" rx="1.5" fill="#9a634a"/>
<rect x="719.94" y="724.00" width="22.20" height="65.90" fill="url(#stepg)"/>
<rect x="779.78" y="712.00" width="1.80" height="89.80" fill="#3b2a24"/>
<rect x="781.98" y="712.00" width="30.20" height="89.80" fill="#774731"/>
<rect x="783.28" y="722.10" width="25.60" height="68.60" rx="1.5" fill="#9a634a"/>
<rect x="784.98" y="724.00" width="22.20" height="65.90" fill="url(#stepg)"/>
<rect x="844.82" y="712.00" width="1.80" height="89.80" fill="#3b2a24"/>
<rect x="847.02" y="712.00" width="30.20" height="89.80" fill="#774731"/>
<rect x="848.32" y="722.10" width="25.60" height="68.60" rx="1.5" fill="#9a634a"/>
<rect x="850.02" y="724.00" width="22.20" height="65.90" fill="url(#stepg)"/>
<rect x="909.86" y="712.00" width="1.80" height="89.80" fill="#3b2a24"/>
<rect x="912.06" y="712.00" width="30.20" height="89.80" fill="#774731"/>
<rect x="913.36" y="722.10" width="25.60" height="68.60" rx="1.5" fill="#9a634a"/>
<rect x="915.06" y="724.00" width="22.20" height="65.90" fill="url(#stepg)"/>
<rect x="974.90" y="712.00" width="1.80" height="89.80" fill="#3b2a24"/>
<rect x="977.10" y="712.00" width="30.20" height="89.80" fill="#774731"/>
<rect x="978.40" y="722.10" width="25.60" height="68.60" rx="1.5" fill="#9a634a"/>
<rect x="980.10" y="724.00" width="22.20" height="65.90" fill="url(#stepg)"/>
<rect x="1039.94" y="712.00" width="1.80" height="89.80" fill="#3b2a24"/>
<rect x="1042.14" y="712.00" width="30.20" height="89.80" fill="#774731"/>
<rect x="1043.44" y="722.10" width="25.60" height="68.60" rx="1.5" fill="#9a634a"/>
<rect x="1045.14" y="724.00" width="22.20" height="65.90" fill="url(#stepg)"/>
<rect x="1104.98" y="712.00" width="1.80" height="89.80" fill="#3b2a24"/>
<rect x="1107.18" y="712.00" width="30.20" height="89.80" fill="#774731"/>
<rect x="1108.48" y="722.10" width="25.60" height="68.60" rx="1.5" fill="#9a634a"/>
<rect x="1110.18" y="724.00" width="22.20" height="65.90" fill="url(#stepg)"/>
<rect x="1170.02" y="712.00" width="1.80" height="89.80" fill="#3b2a24"/>
<rect x="1172.22" y="712.00" width="30.20" height="89.80" fill="#774731"/>
<rect x="1173.52" y="722.10" width="25.60" height="68.60" rx="1.5" fill="#9a634a"/>
<rect x="1175.22" y="724.00" width="22.20" height="65.90" fill="url(#stepg)"/>
<rect x="1235.06" y="712.00" width="1.80" height="89.80" fill="#3b2a24"/>
<rect x="1237.26" y="712.00" width="30.20" height="89.80" fill="#774731"/>
<rect x="1238.56" y="722.10" width="25.60" height="68.60" rx="1.5" fill="#9a634a"/>
<rect x="1240.26" y="724.00" width="22.20" height="65.90" fill="url(#stepg)"/>
<rect x="1300.10" y="712.00" width="1.80" height="89.80" fill="#3b2a24"/>
<rect x="1302.30" y="712.00" width="30.20" height="89.80" fill="#774731"/>
<rect x="1303.60" y="722.10" width="25.60" height="68.60" rx="1.5" fill="#9a634a"/>
<rect x="1305.30" y="724.00" width="22.20" height="65.90" fill="url(#stepg)"/>
<rect x="1365.14" y="712.00" width="1.80" height="89.80" fill="#3b2a24"/>
<rect x="1367.34" y="712.00" width="30.20" height="89.80" fill="#774731"/>
<rect x="1368.64" y="722.10" width="25.60" height="68.60" rx="1.5" fill="#9a634a"/>
<rect x="1370.34" y="724.00" width="22.20" height="65.90" fill="url(#stepg)"/>
<rect x="1430.18" y="712.00" width="1.80" height="89.80" fill="#3b2a24"/>
<rect x="1432.38" y="712.00" width="30.20" height="89.80" fill="#774731"/>
<rect x="1433.68" y="722.10" width="25.60" height="68.60" rx="1.5" fill="#9a634a"/>
<rect x="1435.38" y="724.00" width="22.20" height="65.90" fill="url(#stepg)"/>
<rect x="1495.22" y="712.00" width="1.80" height="89.80" fill="#3b2a24"/>
<rect x="1497.42" y="712.00" width="30.20" height="89.80" fill="#774731"/>
<rect x="1498.72" y="722.10" width="25.60" height="68.60" rx="1.5" fill="#9a634a"/>
<rect x="1500.42" y="724.00" width="22.20" height="65.90" fill="url(#stepg)"/>
<rect x="1560.26" y="712.00" width="1.80" height="89.80" fill="#3b2a24"/>
<rect x="1562.46" y="712.00" width="30.20" height="89.80" fill="#774731"/>
<rect x="1563.76" y="722.10" width="25.60" height="68.60" rx="1.5" fill="#9a634a"/>
<rect x="1565.46" y="724.00" width="22.20" height="65.90" fill="url(#stepg)"/>
<rect x="1625.30" y="712.00" width="1.80" height="89.80" fill="#3b2a24"/>
<rect x="1627.50" y="712.00" width="30.20" height="89.80" fill="#774731"/>
<rect x="1628.80" y="722.10" width="25.60" height="68.60" rx="1.5" fill="#9a634a"/>
<rect x="1630.50" y="724.00" width="22.20" height="65.90" fill="url(#stepg)"/>
<rect x="1690.34" y="712.00" width="1.80" height="89.80" fill="#3b2a24"/>
<rect x="1692.54" y="712.00" width="30.20" height="89.80" fill="#774731"/>
<rect x="1693.84" y="722.10" width="25.60" height="68.60" rx="1.5" fill="#9a634a"/>
<rect x="1695.54" y="724.00" width="22.20" height="65.90" fill="url(#stepg)"/>
<rect x="1755.38" y="712.00" width="1.80" height="89.80" fill="#3b2a24"/>
<rect x="1757.58" y="712.00" width="30.20" height="89.80" fill="#774731"/>
<rect x="1758.88" y="722.10" width="25.60" height="68.60" rx="1.5" fill="#9a634a"/>
<rect x="1760.58" y="724.00" width="22.20" height="65.90" fill="url(#stepg)"/>
<rect x="1820.42" y="712.00" width="1.80" height="89.80" fill="#3b2a24"/>
<rect x="1822.62" y="712.00" width="30.20" height="89.80" fill="#774731"/>
<rect x="1823.92" y="722.10" width="25.60" height="68.60" rx="1.5" fill="#9a634a"/>
<rect x="1825.62" y="724.00" width="22.20" height="65.90" fill="url(#stepg)"/>
<rect x="1885.46" y="712.00" width="1.80" height="89.80" fill="#3b2a24"/>
<rect x="1887.66" y="712.00" width="30.20" height="89.80" fill="#774731"/>
<rect x="1888.96" y="722.10" width="25.60" height="68.60" rx="1.5" fill="#9a634a"/>
<rect x="1890.66" y="724.00" width="22.20" height="65.90" fill="url(#stepg)"/>
<rect x="1950.50" y="712.00" width="1.80" height="89.80" fill="#3b2a24"/>
<rect x="1952.70" y="712.00" width="30.20" height="89.80" fill="#774731"/>
<rect x="1954.00" y="722.10" width="25.60" height="68.60" rx="1.5" fill="#9a634a"/>
<rect x="1955.70" y="724.00" width="22.20" height="65.90" fill="url(#stepg)"/>
<rect x="2015.54" y="712.00" width="1.80" height="89.80" fill="#3b2a24"/>
<rect x="2017.74" y="712.00" width="30.20" height="89.80" fill="#774731"/>
<rect x="2019.04" y="722.10" width="25.60" height="68.60" rx="1.5" fill="#9a634a"/>
<rect x="2020.74" y="724.00" width="22.20" height="65.90" fill="url(#stepg)"/>
<rect x="2080.58" y="712.00" width="1.80" height="89.80" fill="#3b2a24"/>
<rect x="2082.78" y="712.00" width="30.20" height="89.80" fill="#774731"/>
<rect x="2084.08" y="722.10" width="25.60" height="68.60" rx="1.5" fill="#9a634a"/>
<rect x="2085.78" y="724.00" width="22.20" height="65.90" fill="url(#stepg)"/>
<rect x="2145.62" y="712.00" width="1.80" height="89.80" fill="#3b2a24"/>
<rect x="2147.82" y="712.00" width="30.20" height="89.80" fill="#774731"/>
<rect x="2149.12" y="722.10" width="25.60" height="68.60" rx="1.5" fill="#9a634a"/>
<rect x="2150.82" y="724.00" width="22.20" height="65.90" fill="url(#stepg)"/>
<rect x="2210.66" y="712.00" width="1.80" height="89.80" fill="#3b2a24"/>
<rect x="2212.86" y="712.00" width="30.20" height="89.80" fill="#774731"/>
<rect x="2214.16" y="722.10" width="25.60" height="68.60" rx="1.5" fill="#9a634a"/>
<rect x="2215.86" y="724.00" width="22.20" height="65.90" fill="url(#stepg)"/>
<rect x="2275.70" y="712.00" width="1.80" height="89.80" fill="#3b2a24"/>
<rect x="2277.90" y="712.00" width="30.20" height="89.80" fill="#774731"/>
<rect x="2279.20" y="722.10" width="25.60" height="68.60" rx="1.5" fill="#9a634a"/>
<rect x="2280.90" y="724.00" width="22.20" height="65.90" fill="url(#stepg)"/>
<rect x="2340.74" y="712.00" width="1.80" height="89.80" fill="#3b2a24"/>
<rect x="2342.94" y="712.00" width="30.20" height="89.80" fill="#774731"/>
<rect x="2344.24" y="722.10" width="25.60" height="68.60" rx="1.5" fill="#9a634a"/>
<rect x="2345.94" y="724.00" width="22.20" height="65.90" fill="url(#stepg)"/>
<rect x="2405.78" y="712.00" width="1.80" height="89.80" fill="#3b2a24"/>
<rect x="2407.98" y="712.00" width="30.20" height="89.80" fill="#774731"/>
<rect x="2409.28" y="722.10" width="25.60" height="68.60" rx="1.5" fill="#9a634a"/>
<rect x="2410.98" y="724.00" width="22.20" height="65.90" fill="url(#stepg)"/>
<rect x="2470.82" y="712.00" width="1.80" height="89.80" fill="#3b2a24"/>
<rect x="2473.02" y="712.00" width="30.20" height="89.80" fill="#774731"/>
<rect x="2474.32" y="722.10" width="25.60" height="68.60" rx="1.5" fill="#9a634a"/>
<rect x="2476.02" y="724.00" width="22.20" height="65.90" fill="url(#stepg)"/>
<rect x="2535.86" y="712.00" width="1.80" height="89.80" fill="#3b2a24"/>
<rect x="2538.06" y="712.00" width="30.20" height="89.80" fill="#774731"/>
<rect x="2539.36" y="722.10" width="25.60" height="68.60" rx="1.5" fill="#9a634a"/>
<rect x="2541.06" y="724.00" width="22.20" height="65.90" fill="url(#stepg)"/>
<rect x="2600.90" y="712.00" width="1.80" height="89.80" fill="#3b2a24"/>
<rect x="2603.10" y="712.00" width="30.20" height="89.80" fill="#774731"/>
<rect x="2604.40" y="722.10" width="25.60" height="68.60" rx="1.5" fill="#9a634a"/>
<rect x="2606.10" y="724.00" width="22.20" height="65.90" fill="url(#stepg)"/>
<rect x="2665.94" y="712.00" width="1.80" height="89.80" fill="#3b2a24"/>
<rect x="2668.14" y="712.00" width="30.20" height="89.80" fill="#774731"/>
<rect x="2669.44" y="722.10" width="25.60" height="68.60" rx="1.5" fill="#9a634a"/>
<rect x="2671.14" y="724.00" width="22.20" height="65.90" fill="url(#stepg)"/>
<rect x="140.00" y="801.80" width="2592.00" height="2.40" fill="#050506"/>
<rect x="140.00" y="804.00" width="508.00" height="718.00" fill="#000"/>
<rect x="648.00" y="804.00" width="2084.00" height="718.00" fill="#111111"/>
<text x="153.44" y="855.6" font-size="20" fill="#dcdcdc" textLength="147.74" lengthAdjust="spacingAndGlyphs">NOTE (TRACK)</text>
<text x="154.74" y="915.7" font-size="20" fill="#dcdcdc" textLength="224.02" lengthAdjust="spacingAndGlyphs">TIME OFFSET (TRACK)</text>
<text x="154.21" y="975.7" font-size="20" fill="#dcdcdc" textLength="166.73" lengthAdjust="spacingAndGlyphs">SEND A (TRACK)</text>
<text x="154.22" y="1035.8" font-size="20" fill="#dcdcdc" textLength="247.92" lengthAdjust="spacingAndGlyphs">OCTAVE 2 (OSCILLATOR)</text>
<text x="153.44" y="1095.9" font-size="20" fill="#dcdcdc" textLength="266.24" lengthAdjust="spacingAndGlyphs">MOD MODE (OSCILLATOR)</text>
<text x="153.42" y="1156.0" font-size="20" fill="#dcdcdc" textLength="296.73" lengthAdjust="spacingAndGlyphs">MOD AMOUNT (OSCILLATOR)</text>
<text x="153.97" y="1216.0" font-size="20" fill="#dcdcdc" textLength="231.62" lengthAdjust="spacingAndGlyphs">CUTOFF (OSCILLATOR)</text>
<rect x="155.00" y="1239.10" width="478.00" height="59.70" fill="#dedede"/>
<text x="153.44" y="1276.2" font-size="20" fill="#161616" textLength="154.00" lengthAdjust="spacingAndGlyphs">LEVEL (TRACK)</text>
<rect x="156.2" y="1462" width="417.8" height="42.8" rx="4" fill="#000" stroke="#fff" stroke-width="2.2"/>
<text x="318.24" y="1494.7" font-size="30" fill="#fff" textLength="93.79" lengthAdjust="spacingAndGlyphs">LEARN</text>
<path d="M589.6 1470.6H629.8M602.5 1470.6L605.5 1463.4H613.8L616.8 1470.6M593.8 1470.6V1500A4 4 0 0 0 597.8 1504H620.8A4 4 0 0 0 624.8 1500V1470.6" fill="none" stroke="#d6d6d6" stroke-width="2.1"/>
<path d="M680.56 804V1522M713.12 804V1522M745.69 804V1522M778.25 804V1522M810.81 804V1522M843.38 804V1522M875.94 804V1522M908.50 804V1522M941.06 804V1522M973.62 804V1522M1006.19 804V1522M1038.75 804V1522M1071.31 804V1522M1103.88 804V1522M1136.44 804V1522M1169.00 804V1522M1201.56 804V1522M1234.12 804V1522M1266.69 804V1522M1299.25 804V1522M1331.81 804V1522M1364.38 804V1522M1396.94 804V1522M1429.50 804V1522M1462.06 804V1522M1494.62 804V1522M1527.19 804V1522M1559.75 804V1522M1592.31 804V1522M1624.88 804V1522M1657.44 804V1522M1690.00 804V1522M1722.56 804V1522M1755.12 804V1522M1787.69 804V1522M1820.25 804V1522M1852.81 804V1522M1885.38 804V1522M1917.94 804V1522M1950.50 804V1522M1983.06 804V1522M2015.62 804V1522M2048.19 804V1522M2080.75 804V1522M2113.31 804V1522M2145.88 804V1522M2178.44 804V1522M2211.00 804V1522M2243.56 804V1522M2276.12 804V1522M2308.69 804V1522M2341.25 804V1522M2373.81 804V1522M2406.38 804V1522M2438.94 804V1522M2471.50 804V1522M2504.06 804V1522M2536.62 804V1522M2569.19 804V1522M2601.75 804V1522M2634.31 804V1522M2666.88 804V1522M2699.44 804V1522" stroke="#0a0a0a" stroke-width="1.4" fill="none"/>
<path d="M648 1522L648.00 1208.7L680.56 1208.7L680.56 1181.8L713.12 1181.8L713.12 1165.6L745.69 1165.6L745.69 1154.9L778.25 1154.9L778.25 1139.7L810.81 1139.7L810.81 1127.6L843.38 1127.6L843.38 1118.8L875.94 1118.8L875.94 1110.5L908.50 1110.5L908.50 1099.5L941.06 1099.5L941.06 1086.8L973.62 1086.8L973.62 1074.8L1006.19 1074.8L1006.19 1062.7L1038.75 1062.7L1038.75 1046.6L1071.31 1046.6L1071.31 1020.6L1103.88 1020.6L1103.88 996.6L1136.44 996.6L1136.44 967.8L1169.00 967.8L1169.00 934.9L1201.56 934.9L1201.56 926.6L1234.12 926.6L1234.12 925.7L1266.69 925.7L1266.69 908.6L1299.25 908.6L1299.25 899.7L1331.81 899.7L1331.81 897.8L1364.38 897.8L1364.38 897.8L1396.94 897.8L1396.94 899.7L1429.50 899.7L1429.50 931.7L1462.06 931.7L1462.06 961.8L1494.62 961.8L1494.62 997.8L1527.19 997.8L1527.19 1045.6L1559.75 1045.6L1559.75 1078.6L1592.31 1078.6L1592.31 1096.6L1624.88 1096.6L1624.88 1104.8L1657.44 1104.8L1657.44 1114.7L1690.00 1114.7L1690.00 1116.6L1722.56 1116.6L1722.56 1117.5L1755.12 1117.5L1755.12 1119.7L1787.69 1119.7L1787.69 1118.8L1820.25 1118.8L1820.25 1118.8L1852.81 1118.8L1852.81 1114.7L1885.38 1114.7L1885.38 1112.8L1917.94 1112.8L1917.94 1102.6L1950.50 1102.6L1950.50 1096.6L1983.06 1096.6L1983.06 1082.7L2015.62 1082.7L2015.62 1076.7L2048.19 1076.7L2048.19 1069.7L2080.75 1069.7L2080.75 1056.7L2113.31 1056.7L2113.31 1038.7L2145.88 1038.7L2145.88 1028.6L2178.44 1028.6L2178.44 1008.6L2211.00 1008.6L2211.00 990.6L2243.56 990.6L2243.56 980.8L2276.12 980.8L2276.12 961.8L2308.69 961.8L2308.69 947.5L2341.25 947.5L2341.25 938.7L2373.81 938.7L2373.81 967.8L2406.38 967.8L2406.38 970.6L2438.94 970.6L2438.94 982.7L2471.50 982.7L2471.50 987.7L2504.06 987.7L2504.06 993.7L2536.62 993.7L2536.62 1000.7L2569.19 1000.7L2569.19 1006.7L2601.75 1006.7L2601.75 1024.8L2634.31 1024.8L2634.31 1039.6L2666.88 1039.6L2666.88 1051.7L2699.44 1051.7L2699.44 1051.7L2732.00 1051.7L2732 1522Z" fill="#e88b5e"/>
<path d="M679.66 1181.8V1522M712.23 1165.6V1522M744.79 1154.9V1522M777.35 1139.7V1522M809.91 1127.6V1522M842.48 1118.8V1522M875.04 1110.5V1522M907.60 1099.5V1522M940.16 1086.8V1522M972.73 1074.8V1522M1005.29 1062.7V1522M1037.85 1046.6V1522M1070.41 1020.6V1522M1102.97 996.6V1522M1135.54 967.8V1522M1168.10 934.9V1522M1200.66 926.6V1522M1233.22 925.7V1522M1265.79 908.6V1522M1298.35 899.7V1522M1330.91 897.8V1522M1363.47 897.8V1522M1396.04 897.8V1522M1428.60 899.7V1522M1461.16 931.7V1522M1493.72 961.8V1522M1526.29 997.8V1522M1558.85 1045.6V1522M1591.41 1078.6V1522M1623.97 1096.6V1522M1656.54 1104.8V1522M1689.10 1114.7V1522M1721.66 1116.6V1522M1754.22 1117.5V1522M1786.79 1118.8V1522M1819.35 1118.8V1522M1851.91 1114.7V1522M1884.47 1112.8V1522M1917.04 1102.6V1522M1949.60 1096.6V1522M1982.16 1082.7V1522M2014.72 1076.7V1522M2047.29 1069.7V1522M2079.85 1056.7V1522M2112.41 1038.7V1522M2144.97 1028.6V1522M2177.54 1008.6V1522M2210.10 990.6V1522M2242.66 980.8V1522M2275.22 961.8V1522M2307.79 947.5V1522M2340.35 938.7V1522M2372.91 938.7V1522M2405.47 967.8V1522M2438.04 970.6V1522M2470.60 982.7V1522M2503.16 987.7V1522M2535.72 993.7V1522M2568.29 1000.7V1522M2600.85 1006.7V1522M2633.41 1024.8V1522M2665.97 1039.6V1522M2698.54 1051.7V1522" stroke="#060508" stroke-width="1.8" fill="none"/>
<rect x="140.00" y="1521.80" width="2592.00" height="4.30" fill="#111113"/>
<rect x="140.00" y="1526.00" width="2592.00" height="76.00" fill="#141417"/>
<rect x="140.00" y="1526.00" width="148.60" height="72.00" fill="#3e3e46"/>
<text x="208.22" y="1575.1" font-size="33" fill="#b9b9c9" textLength="11.59" lengthAdjust="spacingAndGlyphs">1</text>
<rect x="292.72" y="1526.00" width="148.60" height="72.00" fill="#3e3e46"/>
<text x="358.04" y="1575.1" font-size="33" fill="#b9b9c9" textLength="18.05" lengthAdjust="spacingAndGlyphs">2</text>
<rect x="445.44" y="1526.00" width="148.60" height="72.00" fill="#3e3e46"/>
<text x="511.05" y="1575.1" font-size="33" fill="#b9b9c9" textLength="17.48" lengthAdjust="spacingAndGlyphs">3</text>
<rect x="598.16" y="1526.00" width="148.60" height="72.00" fill="#3e3e46"/>
<text x="663.74" y="1575.1" font-size="33" fill="#b9b9c9" textLength="17.53" lengthAdjust="spacingAndGlyphs">4</text>
<rect x="750.88" y="1526.00" width="148.60" height="72.00" fill="#3e3e46"/>
<text x="816.49" y="1575.1" font-size="33" fill="#b9b9c9" textLength="17.48" lengthAdjust="spacingAndGlyphs">5</text>
<rect x="903.60" y="1526.00" width="148.60" height="72.00" fill="#e88b5e"/>
<text x="968.65" y="1575.1" font-size="33" fill="#fff" textLength="18.35" lengthAdjust="spacingAndGlyphs">6</text>
<rect x="1056.32" y="1526.00" width="148.60" height="72.00" fill="#3e3e46"/>
<text x="1121.94" y="1575.1" font-size="33" fill="#b9b9c9" textLength="17.45" lengthAdjust="spacingAndGlyphs">7</text>
<rect x="1209.04" y="1526.00" width="148.60" height="72.00" fill="#3e3e46"/>
<text x="1274.36" y="1575.1" font-size="33" fill="#b9b9c9" textLength="18.06" lengthAdjust="spacingAndGlyphs">8</text>
<rect x="1361.76" y="1526.00" width="148.60" height="72.00" fill="#3e3e46"/>
<text x="1426.81" y="1575.1" font-size="33" fill="#b9b9c9" textLength="18.35" lengthAdjust="spacingAndGlyphs">9</text>
<rect x="1514.48" y="1526.00" width="148.60" height="72.00" fill="#3e3e46"/>
<text x="1574.39" y="1575.1" font-size="33" fill="#b9b9c9" textLength="27.81" lengthAdjust="spacingAndGlyphs">10</text>
<rect x="1667.20" y="1526.00" width="148.60" height="72.00" fill="#3e3e46"/>
<text x="1731.60" y="1575.1" font-size="33" fill="#b9b9c9" textLength="19.25" lengthAdjust="spacingAndGlyphs">11</text>
<rect x="1819.92" y="1526.00" width="148.60" height="72.00" fill="#3e3e46"/>
<text x="1880.09" y="1575.1" font-size="33" fill="#b9b9c9" textLength="27.67" lengthAdjust="spacingAndGlyphs">12</text>
<rect x="1972.64" y="1526.00" width="148.60" height="72.00" fill="#3e3e46"/>
<text x="2032.82" y="1575.1" font-size="33" fill="#b9b9c9" textLength="27.46" lengthAdjust="spacingAndGlyphs">13</text>
<rect x="2125.36" y="1526.00" width="148.60" height="72.00" fill="#3e3e46"/>
<text x="2184.71" y="1575.1" font-size="33" fill="#b9b9c9" textLength="28.70" lengthAdjust="spacingAndGlyphs">14</text>
<rect x="2278.08" y="1526.00" width="148.60" height="72.00" fill="#3e3e46"/>
<text x="2338.26" y="1575.1" font-size="33" fill="#b9b9c9" textLength="27.46" lengthAdjust="spacingAndGlyphs">15</text>
<rect x="2430.80" y="1526.00" width="148.60" height="72.00" fill="#3e3e46"/>
<text x="2490.69" y="1575.1" font-size="33" fill="#b9b9c9" textLength="28.02" lengthAdjust="spacingAndGlyphs">16</text>
<rect x="2583.52" y="1526.00" width="148.60" height="72.00" fill="#3e3e46"/>
<text x="2646.21" y="1575.1" font-size="33" fill="#b9b9c9" textLength="23.21" lengthAdjust="spacingAndGlyphs">M</text>
<rect x="140.00" y="1598.00" width="2592.00" height="357.00" fill="#141417"/>
<path d="M141.2 1777.2V1613.0A11 11 0 0 1 152.2 1602.0H430.8A11 11 0 0 1 441.8 1613.0V1777.2Z" fill="url(#padg)"/>
<text x="155.02" y="1635.8" font-size="25" fill="#c3c3cf" textLength="90.11" lengthAdjust="spacingAndGlyphs">1 - NOISE</text>
<line x1="156.9" y1="1688.1" x2="426.3" y2="1688.1" stroke="#3b3c8c" stroke-width="1.1" opacity="0.9"/>
<line x1="156.9" y1="1688.1" x2="426.3" y2="1688.1" stroke="#3b3c8c" stroke-width="5" opacity="0.12"/>
<path d="M141.2 1952.0V1790.8A11 11 0 0 1 152.2 1779.8H430.8A11 11 0 0 1 441.8 1790.8V1952.0Z" fill="url(#padg)"/>
<text x="155.39" y="1813.6" font-size="25" fill="#c3c3cf" textLength="164.15" lengthAdjust="spacingAndGlyphs">2 - DRUM SYNTH</text>
<line x1="156.9" y1="1865.2" x2="426.3" y2="1865.2" stroke="#4a3c8c" stroke-width="1.1" opacity="0.9"/>
<line x1="156.9" y1="1865.2" x2="426.3" y2="1865.2" stroke="#4a3c8c" stroke-width="5" opacity="0.12"/>
<path d="M446.2 1777.2V1613.0A11 11 0 0 1 457.2 1602.0H735.8A11 11 0 0 1 746.8 1613.0V1777.2Z" fill="url(#padg)"/>
<text x="461.88" y="1635.8" font-size="25" fill="#c3c3cf" textLength="127.62" lengthAdjust="spacingAndGlyphs">3 - SAMPLER</text>
<line x1="461.9" y1="1688.1" x2="731.3" y2="1688.1" stroke="#7c3a8c" stroke-width="1.1" opacity="0.9"/>
<line x1="461.9" y1="1688.1" x2="731.3" y2="1688.1" stroke="#7c3a8c" stroke-width="5" opacity="0.12"/>
<path d="M446.2 1952.0V1790.8A11 11 0 0 1 457.2 1779.8H735.8A11 11 0 0 1 746.8 1790.8V1952.0Z" fill="url(#padg)"/>
<text x="462.09" y="1813.6" font-size="25" fill="#c3c3cf" textLength="93.66" lengthAdjust="spacingAndGlyphs">4 - NOISE</text>
<line x1="461.9" y1="1865.2" x2="731.3" y2="1865.2" stroke="#8c3a58" stroke-width="1.1" opacity="0.9"/>
<line x1="461.9" y1="1865.2" x2="731.3" y2="1865.2" stroke="#8c3a58" stroke-width="5" opacity="0.12"/>
<path d="M751.2 1777.2V1613.0A11 11 0 0 1 762.2 1602.0H1040.8A11 11 0 0 1 1051.8 1613.0V1777.2Z" fill="url(#padg)"/>
<text x="766.69" y="1635.8" font-size="25" fill="#c3c3cf" textLength="164.05" lengthAdjust="spacingAndGlyphs">5 - DRUM SYNTH</text>
<line x1="766.9" y1="1688.1" x2="1036.3" y2="1688.1" stroke="#8c3a2c" stroke-width="1.1" opacity="0.9"/>
<line x1="766.9" y1="1688.1" x2="1036.3" y2="1688.1" stroke="#8c3a2c" stroke-width="5" opacity="0.12"/>
<path d="M751.2 1952.0V1790.8A11 11 0 0 1 762.2 1779.8H1040.8A11 11 0 0 1 1051.8 1790.8V1952.0Z" fill="url(#padg)"/>
<rect x="752.4" y="1781.0" width="298.2" height="169.8" rx="9" fill="none" stroke="#a01218" stroke-width="2.2"/>
<text x="766.48" y="1813.6" font-size="25" fill="#c3c3cf" textLength="156.98" lengthAdjust="spacingAndGlyphs">6 - OSCILLATOR</text>
<line x1="766.9" y1="1865.2" x2="1036.3" y2="1865.2" stroke="#8c5a2a" stroke-width="1.1" opacity="0.9"/>
<line x1="766.9" y1="1865.2" x2="1036.3" y2="1865.2" stroke="#8c5a2a" stroke-width="5" opacity="0.12"/>
<path d="M1056.2 1777.2V1613.0A11 11 0 0 1 1067.2 1602.0H1345.8A11 11 0 0 1 1356.8 1613.0V1777.2Z" fill="url(#padg)"/>
<text x="1071.49" y="1635.8" font-size="25" fill="#c3c3cf" textLength="155.77" lengthAdjust="spacingAndGlyphs">7 - OSCILLATOR</text>
<line x1="1071.9" y1="1688.1" x2="1341.3" y2="1688.1" stroke="#8c6c2a" stroke-width="1.1" opacity="0.9"/>
<line x1="1071.9" y1="1688.1" x2="1341.3" y2="1688.1" stroke="#8c6c2a" stroke-width="5" opacity="0.12"/>
<path d="M1056.2 1952.0V1790.8A11 11 0 0 1 1067.2 1779.8H1345.8A11 11 0 0 1 1356.8 1790.8V1952.0Z" fill="url(#padg)"/>
<text x="1071.68" y="1813.6" font-size="25" fill="#c3c3cf" textLength="157.18" lengthAdjust="spacingAndGlyphs">8 - OSCILLATOR</text>
<line x1="1071.9" y1="1865.2" x2="1341.3" y2="1865.2" stroke="#8c8a2c" stroke-width="1.1" opacity="0.9"/>
<line x1="1071.9" y1="1865.2" x2="1341.3" y2="1865.2" stroke="#8c8a2c" stroke-width="5" opacity="0.12"/>
<path d="M1361.2 1777.2V1613.0A11 11 0 0 1 1372.2 1602.0H1650.8A11 11 0 0 1 1661.8 1613.0V1777.2Z" fill="url(#padg)"/>
<text x="1376.68" y="1635.8" font-size="25" fill="#c3c3cf" textLength="128.13" lengthAdjust="spacingAndGlyphs">9 - SAMPLER</text>
<line x1="1376.9" y1="1688.1" x2="1646.3" y2="1688.1" stroke="#8c7c2a" stroke-width="1.1" opacity="0.9"/>
<line x1="1376.9" y1="1688.1" x2="1646.3" y2="1688.1" stroke="#8c7c2a" stroke-width="5" opacity="0.12"/>
<path d="M1361.2 1952.0V1790.8A11 11 0 0 1 1372.2 1779.8H1650.8A11 11 0 0 1 1661.8 1790.8V1952.0Z" fill="url(#padg)"/>
<text x="1376.29" y="1813.6" font-size="25" fill="#c3c3cf" textLength="136.21" lengthAdjust="spacingAndGlyphs">10 - SAMPLER</text>
<line x1="1376.9" y1="1865.2" x2="1646.3" y2="1865.2" stroke="#7c8c2a" stroke-width="1.1" opacity="0.9"/>
<line x1="1376.9" y1="1865.2" x2="1646.3" y2="1865.2" stroke="#7c8c2a" stroke-width="5" opacity="0.12"/>
<path d="M1666.2 1777.2V1613.0A11 11 0 0 1 1677.2 1602.0H1955.8A11 11 0 0 1 1966.8 1613.0V1777.2Z" fill="url(#padg)"/>
<text x="1681.53" y="1635.8" font-size="25" fill="#c3c3cf" textLength="160.24" lengthAdjust="spacingAndGlyphs">11 - OSCILLATOR</text>
<line x1="1681.9" y1="1688.1" x2="1951.3" y2="1688.1" stroke="#3a8c3a" stroke-width="1.1" opacity="0.9"/>
<line x1="1681.9" y1="1688.1" x2="1951.3" y2="1688.1" stroke="#3a8c3a" stroke-width="5" opacity="0.12"/>
<path d="M1666.2 1952.0V1790.8A11 11 0 0 1 1677.2 1779.8H1955.8A11 11 0 0 1 1966.8 1790.8V1952.0Z" fill="url(#padg)"/>
<text x="1681.50" y="1813.6" font-size="25" fill="#c3c3cf" textLength="135.70" lengthAdjust="spacingAndGlyphs">12 - SAMPLER</text>
<line x1="1681.9" y1="1865.2" x2="1951.3" y2="1865.2" stroke="#2c8c40" stroke-width="1.1" opacity="0.9"/>
<line x1="1681.9" y1="1865.2" x2="1951.3" y2="1865.2" stroke="#2c8c40" stroke-width="5" opacity="0.12"/>
<path d="M1971.2 1777.2V1613.0A11 11 0 0 1 1982.2 1602.0H2260.8A11 11 0 0 1 2271.8 1613.0V1777.2Z" fill="url(#padg)"/>
<text x="1987.20" y="1635.8" font-size="25" fill="#c3c3cf" textLength="97.90" lengthAdjust="spacingAndGlyphs">13 - NONE</text>
<line x1="1986.9" y1="1688.1" x2="2256.3" y2="1688.1" stroke="#2a8c6a" stroke-width="1.1" opacity="0.9"/>
<line x1="1986.9" y1="1688.1" x2="2256.3" y2="1688.1" stroke="#2a8c6a" stroke-width="5" opacity="0.12"/>
<path d="M1971.2 1952.0V1790.8A11 11 0 0 1 1982.2 1779.8H2260.8A11 11 0 0 1 2271.8 1790.8V1952.0Z" fill="url(#padg)"/>
<text x="1987.19" y="1813.6" font-size="25" fill="#c3c3cf" textLength="98.31" lengthAdjust="spacingAndGlyphs">14 - NONE</text>
<line x1="1986.9" y1="1865.2" x2="2256.3" y2="1865.2" stroke="#2a6c8c" stroke-width="1.1" opacity="0.9"/>
<line x1="1986.9" y1="1865.2" x2="2256.3" y2="1865.2" stroke="#2a6c8c" stroke-width="5" opacity="0.12"/>
<path d="M2276.2 1777.2V1613.0A11 11 0 0 1 2287.2 1602.0H2565.8A11 11 0 0 1 2576.8 1613.0V1777.2Z" fill="url(#padg)"/>
<text x="2291.71" y="1635.8" font-size="25" fill="#c3c3cf" textLength="97.08" lengthAdjust="spacingAndGlyphs">15 - NONE</text>
<line x1="2291.9" y1="1688.1" x2="2561.3" y2="1688.1" stroke="#2a4c9c" stroke-width="1.1" opacity="0.9"/>
<line x1="2291.9" y1="1688.1" x2="2561.3" y2="1688.1" stroke="#2a4c9c" stroke-width="5" opacity="0.12"/>
<path d="M2276.2 1952.0V1790.8A11 11 0 0 1 2287.2 1779.8H2565.8A11 11 0 0 1 2576.8 1790.8V1952.0Z" fill="url(#padg)"/>
<text x="2291.71" y="1813.6" font-size="25" fill="#c3c3cf" textLength="97.08" lengthAdjust="spacingAndGlyphs">16 - NONE</text>
<line x1="2291.9" y1="1865.2" x2="2561.3" y2="1865.2" stroke="#2a3c8c" stroke-width="1.1" opacity="0.9"/>
<line x1="2291.9" y1="1865.2" x2="2561.3" y2="1865.2" stroke="#2a3c8c" stroke-width="5" opacity="0.12"/>
<rect x="2581.90" y="1602.00" width="148.00" height="349.40" fill="#2b2b30"/>
<rect x="2590.20" y="1610.20" width="131.20" height="75.60" rx="13" fill="#222226"/>
<rect x="2597.10" y="1616.80" width="117.40" height="62.50" rx="8" fill="url(#rbtn)"/>
<path d="M2603 1617.6H2708.5" stroke="#8e8e96" stroke-width="1.4" opacity="0.75"/>
<text x="2631.09" y="1658.4" font-size="28" fill="#ececf2" textLength="48.83" lengthAdjust="spacingAndGlyphs">KBD</text>
<rect x="2590.20" y="1696.20" width="131.20" height="75.60" rx="13" fill="#222226"/>
<rect x="2597.10" y="1702.80" width="117.40" height="62.50" rx="8" fill="url(#rbtn)"/>
<path d="M2603 1703.6H2708.5" stroke="#8e8e96" stroke-width="1.4" opacity="0.75"/>
<text x="2625.11" y="1744.4" font-size="28" fill="#ececf2" textLength="61.63" lengthAdjust="spacingAndGlyphs">SOLO</text>
<rect x="2590.20" y="1782.00" width="131.20" height="75.60" rx="13" fill="#222226"/>
<rect x="2597.10" y="1788.60" width="117.40" height="62.50" rx="8" fill="url(#rbtn)"/>
<path d="M2603 1789.3999999999999H2708.5" stroke="#8e8e96" stroke-width="1.4" opacity="0.75"/>
<text x="2622.53" y="1830.2" font-size="28" fill="#ececf2" textLength="65.76" lengthAdjust="spacingAndGlyphs">MUTE</text>
<rect x="2590.20" y="1866.30" width="131.20" height="75.60" rx="13" fill="#222226"/>
<rect x="2597.10" y="1872.90" width="117.40" height="62.50" rx="8" fill="url(#rbtn)"/>
<path d="M2603 1873.7H2708.5" stroke="#8e8e96" stroke-width="1.4" opacity="0.75"/>
<text x="2631.90" y="1914.5" font-size="28" fill="#ececf2" textLength="49.57" lengthAdjust="spacingAndGlyphs">ARM</text>
<rect x="140.00" y="1953.60" width="2592.00" height="4.00" fill="#050506"/>
<rect x="140.00" y="1957.50" width="2592.00" height="90.50" fill="#212125"/>
<rect x="154.80" y="1972.70" width="120.10" height="60.10" rx="8" fill="#2d2d32"/>
<path d="M213.9 1985L234.3 2007.1H224.8V2021.3H203.0V2007.1H193.5Z" fill="none" stroke="#c6c6c6" stroke-width="2.6" stroke-linejoin="miter"/>
<rect x="305.20" y="1972.70" width="210.00" height="60.10" rx="6" fill="#000"/>
<rect x="309.20" y="1977.20" width="64.80" height="51.80" rx="3" fill="#454545"/>
<text x="388.11" y="2011.4" font-size="24.5" fill="#cacaca" textLength="45.01" lengthAdjust="spacingAndGlyphs">35%</text>
<rect x="584.4" y="1982.3" width="41.6" height="41.2" rx="4.5" fill="none" stroke="#fff" stroke-width="2.4"/>
<path d="M583.2 1997.4V1985.8A4.6 4.6 0 0 1 587.8 1981.1H622.6A4.6 4.6 0 0 1 627.2 1985.8V1997.4Z" fill="#fff"/>
<rect x="673.9" y="1982.3" width="41.6" height="41.2" rx="4.5" fill="none" stroke="#fff" stroke-width="2.4"/>
<path d="M672.7 2009.1V2020A4.6 4.6 0 0 0 677.3 2024.7H712A4.6 4.6 0 0 0 716.7 2020V2009.1Z" fill="#fff"/>
<path d="M824.8 1986.6H844.6A22 22 0 1 1 822.6 2008.6" fill="none" stroke="#fff" stroke-width="2.5"/>
<path d="M835.8 1975.6L824.8 1986.6L835.8 1997.6" fill="none" stroke="#fff" stroke-width="2.5"/>
<path d="M955.0 1986.6H935.2A22 22 0 1 0 957.2 2008.6" fill="none" stroke="#8e8e8e" stroke-width="2.3"/>
<path d="M944.0 1975.6L955.0 1986.6L944.0 1997.6" fill="none" stroke="#8e8e8e" stroke-width="2.3"/>
<path d="M1355 1983.2L1393.5 2003.2L1355 2023.2Z" fill="url(#playg)" stroke="url(#playg)" stroke-width="4.5" stroke-linejoin="round"/>
<rect x="1435.60" y="1972.80" width="1.20" height="60.20" fill="#3a3a41"/>
<rect x="1475.00" y="1981.00" width="44.00" height="44.30" rx="4.5" fill="#74747e"/>
<rect x="1557.40" y="1972.80" width="1.20" height="60.20" fill="#3a3a41"/>
<circle cx="1619" cy="2003.2" r="22.2" fill="#8f1014"/>
<rect x="1680.1" y="1973.9" width="118" height="58.2" rx="9" fill="none" stroke="#8c8c8c" stroke-width="2"/>
<text x="1713.08" y="2012.3" font-size="25.5" fill="#fff" textLength="52.02" lengthAdjust="spacingAndGlyphs" stroke="#fff" stroke-width="0.9">LATCH</text>
<rect x="1860.05" y="1973.9" width="57.95" height="58.2" rx="9" fill="none" stroke="#8c8c8c" stroke-width="2"/>
<path d="M1878.7 2005.6Q1879.2 1998.6 1885.2 1996.6M1891.6 1999.4L1896.6 2004.4" fill="none" stroke="#fff" stroke-width="1.5"/>
<rect x="1876.40" y="2007.10" width="5.0" height="5.0" transform="rotate(45 1878.9 2009.6)" fill="#212125" stroke="#fff" stroke-width="1.45"/>
<rect x="1886.40" y="1994.20" width="5.0" height="5.0" transform="rotate(45 1888.9 1996.7)" fill="#212125" stroke="#fff" stroke-width="1.45"/>
<rect x="1896.80" y="2004.60" width="5.0" height="5.0" transform="rotate(45 1899.3 2007.1)" fill="#212125" stroke="#fff" stroke-width="1.45"/>
<path d="M2312.8 1983.8H2332.5L2341.6 1993.5V2022.4H2312.8ZM2332 1984V1994H2341.4" fill="none" stroke="#fff" stroke-width="2.2" stroke-linejoin="round"/>
<line x1="2318.0" y1="2005.2" x2="2318.0" y2="2010.2" stroke="#fff" stroke-width="1.6"/>
<line x1="2322.3" y1="2002.95" x2="2322.3" y2="2012.45" stroke="#fff" stroke-width="1.6"/>
<line x1="2326.7" y1="1998.2" x2="2326.7" y2="2017.2" stroke="#fff" stroke-width="1.6"/>
<line x1="2331.1" y1="2002.95" x2="2331.1" y2="2012.45" stroke="#fff" stroke-width="1.6"/>
<line x1="2335.7" y1="2005.2" x2="2335.7" y2="2010.2" stroke="#fff" stroke-width="1.6"/>
<path d="M2411.5 2023.1A21 21 0 1 1 2422.7 2023.1A5.8 5.8 0 0 0 2411.5 2023.1Z" fill="none" stroke="#fff" stroke-width="2.2" stroke-linejoin="round"/>
<circle cx="2404.1" cy="2003.6" r="2.7" fill="#fff"/>
<circle cx="2408.5" cy="1994.7" r="2.7" fill="#fff"/>
<circle cx="2417.1" cy="1990.8" r="2.7" fill="#fff"/>
<circle cx="2425.7" cy="1994.7" r="2.7" fill="#fff"/>
<circle cx="2430.1" cy="2003.6" r="2.7" fill="#fff"/>
<polygon points="2486.6,2003.0 2496.8,1985.2 2517.3,1985.2 2527.6,2003.0 2517.3,2020.8 2496.8,2020.8" fill="none" stroke="#fff" stroke-width="2.1" stroke-linejoin="round"/>
<circle cx="2507.1" cy="2003" r="7.4" fill="none" stroke="#fff" stroke-width="2.1"/>
<rect x="2597.10" y="1972.90" width="120.00" height="60.00" rx="9" fill="#2f2f34"/>
<path d="M2656.3 1985L2676.7000000000003 2007.1H2667.2000000000003V2021.3H2645.4V2007.1H2635.9Z" fill="none" stroke="#b2b2b2" stroke-width="2.6" stroke-linejoin="miter"/>
<rect x="46.3" y="788.3" width="11.4" height="11.4" rx="1" fill="none" stroke="#c4c4c4" stroke-width="2.6"/>
<rect x="64.3" y="788.3" width="11.4" height="11.4" rx="1" fill="none" stroke="#c4c4c4" stroke-width="2.6"/>
<rect x="82.3" y="788.3" width="11.4" height="11.4" rx="1" fill="none" stroke="#c4c4c4" stroke-width="2.6"/>
<rect x="46.3" y="806.4" width="11.4" height="11.4" rx="1" fill="none" stroke="#c4c4c4" stroke-width="2.6"/>
<rect x="64.3" y="806.4" width="11.4" height="11.4" rx="1" fill="none" stroke="#c4c4c4" stroke-width="2.6"/>
<rect x="82.3" y="806.4" width="11.4" height="11.4" rx="1" fill="none" stroke="#c4c4c4" stroke-width="2.6"/>
<rect x="46.3" y="824.5" width="11.4" height="11.4" rx="1" fill="none" stroke="#c4c4c4" stroke-width="2.6"/>
<rect x="64.3" y="824.5" width="11.4" height="11.4" rx="1" fill="none" stroke="#c4c4c4" stroke-width="2.6"/>
<rect x="82.3" y="824.5" width="11.4" height="11.4" rx="1" fill="none" stroke="#c4c4c4" stroke-width="2.6"/>
<rect x="45.5" y="929.3" width="49.2" height="12" rx="1.5" fill="none" stroke="#c4c4c4" stroke-width="2.6"/>
<path d="M62 929.3V941.3M78.4 929.3V941.3" stroke="#c4c4c4" stroke-width="2.4"/>
<rect x="66.60" y="933.70" width="7.00" height="3.20" fill="#c4c4c4"/>
<rect x="83.00" y="933.70" width="7.00" height="3.20" fill="#c4c4c4"/>
<rect x="45.5" y="948.3" width="49.2" height="12" rx="1.5" fill="none" stroke="#c4c4c4" stroke-width="2.6"/>
<path d="M62 948.3V960.3M78.4 948.3V960.3" stroke="#c4c4c4" stroke-width="2.4"/>
<rect x="50.20" y="952.70" width="7.00" height="3.20" fill="#c4c4c4"/>
<rect x="83.00" y="952.70" width="7.00" height="3.20" fill="#c4c4c4"/>
<rect x="45.5" y="967.2" width="49.2" height="12" rx="1.5" fill="none" stroke="#c4c4c4" stroke-width="2.6"/>
<path d="M62 967.2V979.2M78.4 967.2V979.2" stroke="#c4c4c4" stroke-width="2.4"/>
<rect x="66.60" y="971.60" width="7.00" height="3.20" fill="#c4c4c4"/>
<rect x="19.80" y="1045.60" width="100.70" height="100.20" rx="9" fill="#fff"/>
<path d="M40.3 1096.3H99.7M47.6 1096.3V1084.6H62.4V1118.9H78V1071.6H92.6V1096.3" fill="none" stroke="#0a0a0a" stroke-width="2.4"/>
<rect x="66.40" y="1101.20" width="7.20" height="11.20" fill="#0a0a0a"/>
<rect x="81.60" y="1085.00" width="7.00" height="7.60" fill="#0a0a0a"/>
<rect x="48.9" y="1215.5" width="42.7" height="45.3" fill="none" stroke="#c4c4c4" stroke-width="2.5"/>
<path d="M48.9 1225.6H72V1234.8H48.9M48.9 1241.5H72V1250.7H48.9M72 1230.2H91.6M72 1246.1H91.6" fill="none" stroke="#c4c4c4" stroke-width="2.3"/>
<path d="M53.2 1367V1404.7M70 1355.2V1382M70 1394.4V1404.7M86.6 1355.4V1366M86.6 1378.2V1404.7" stroke="#c4c4c4" stroke-width="2.4" fill="none"/>
<rect x="47.6" y="1355.6000000000001" width="11.2" height="11.2" rx="4.6" fill="none" stroke="#c4c4c4" stroke-width="2.4"/>
<rect x="64.4" y="1382.6000000000001" width="11.2" height="11.2" rx="4.6" fill="none" stroke="#c4c4c4" stroke-width="2.4"/>
<rect x="81.0" y="1366.5" width="11.2" height="11.2" rx="4.6" fill="none" stroke="#c4c4c4" stroke-width="2.4"/>
</svg>
</body></html>
